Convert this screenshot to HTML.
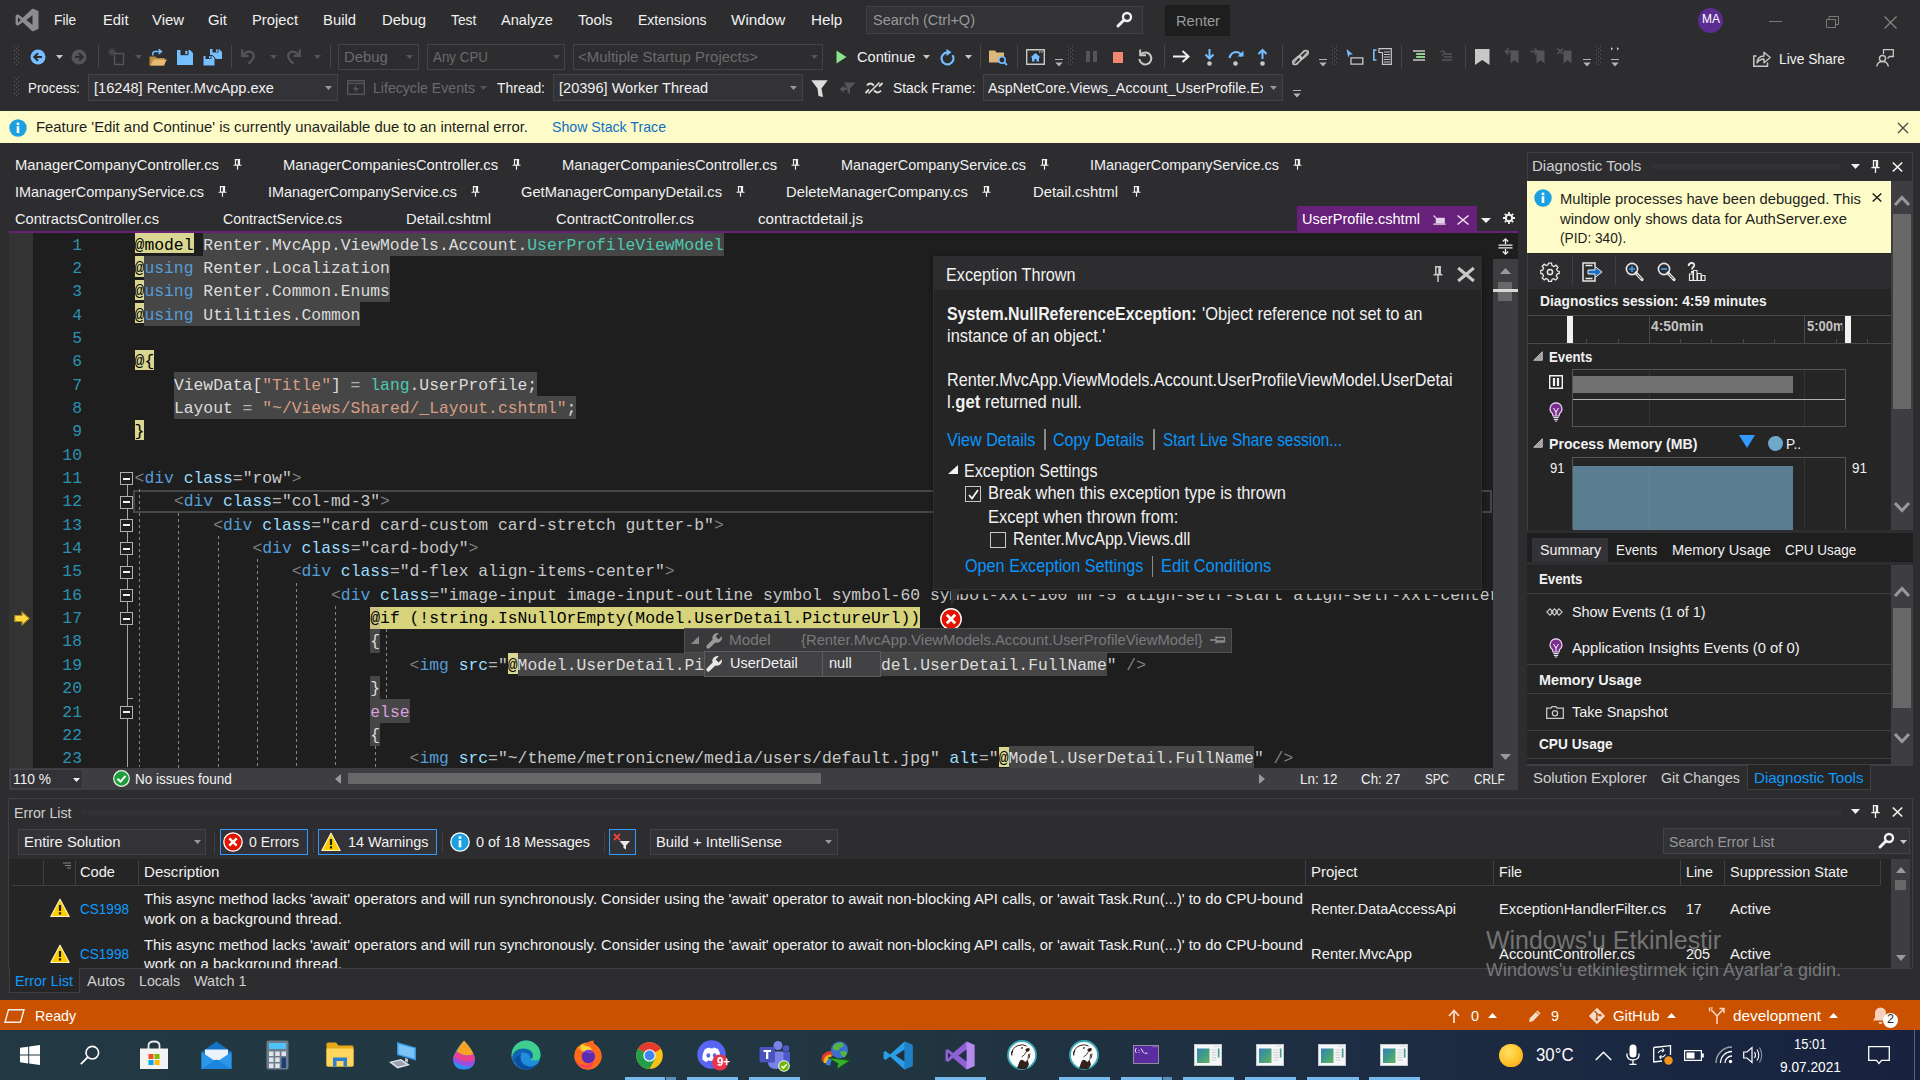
<!DOCTYPE html>
<html lang="en"><head><meta charset="utf-8"><title>Renter - Microsoft Visual Studio</title>
<style>
html,body{margin:0;padding:0;}
body{width:1920px;height:1080px;overflow:hidden;background:#2d2d30;position:relative;font-family:"Liberation Sans",sans-serif;font-size:15px;color:#f1f1f1;}
.a{position:absolute;box-sizing:border-box;}
.t{white-space:pre;transform-origin:0 50%;}
svg{display:block;overflow:visible;}
</style></head>
<body>
<svg class="a" style="left:15px;top:8px;" width="24" height="24" viewBox="0 0 24 24"><path d="M17.6 0.6 L23.5 3 V21 L17.6 23.4 L7.6 14.2 L3 17.8 L0.6 16.6 V7.4 L3 6.2 L7.6 9.8 Z M17.5 7.3 L11.4 12 L17.5 16.7 Z M3 9.3 V14.7 L5.8 12 Z" fill="#8c8c8f" fill-rule="evenodd"/></svg>
<div class="a t" id="t1" style="transform:scaleX(0.9143);left:54.2px;top:9.20px;height:21px;line-height:21px;font-size:15px;color:#f1f1f1;">File</div>
<div class="a t" id="t2" style="transform:scaleX(0.9861);left:102.5px;top:9.20px;height:21px;line-height:21px;font-size:15px;color:#f1f1f1;">Edit</div>
<div class="a t" id="t3" style="transform:scaleX(0.9922);left:152px;top:9.20px;height:21px;line-height:21px;font-size:15px;color:#f1f1f1;">View</div>
<div class="a t" id="t4" style="transform:scaleX(0.9910);left:208px;top:9.20px;height:21px;line-height:21px;font-size:15px;color:#f1f1f1;">Git</div>
<div class="a t" id="t5" style="transform:scaleX(0.9853);left:252px;top:9.20px;height:21px;line-height:21px;font-size:15px;color:#f1f1f1;">Project</div>
<div class="a t" id="t6" style="transform:scaleX(0.9892);left:322.5px;top:9.20px;height:21px;line-height:21px;font-size:15px;color:#f1f1f1;">Build</div>
<div class="a t" id="t7" style="transform:scaleX(0.9954);left:381.5px;top:9.20px;height:21px;line-height:21px;font-size:15px;color:#f1f1f1;">Debug</div>
<div class="a t" id="t8" style="transform:scaleX(0.9195);left:451px;top:9.20px;height:21px;line-height:21px;font-size:15px;color:#f1f1f1;">Test</div>
<div class="a t" id="t9" style="transform:scaleX(0.9705);left:501.2px;top:9.20px;height:21px;line-height:21px;font-size:15px;color:#f1f1f1;">Analyze</div>
<div class="a t" id="t10" style="transform:scaleX(0.9791);left:577.5px;top:9.20px;height:21px;line-height:21px;font-size:15px;color:#f1f1f1;">Tools</div>
<div class="a t" id="t11" style="transform:scaleX(0.9336);left:637.5px;top:9.20px;height:21px;line-height:21px;font-size:15px;color:#f1f1f1;">Extensions</div>
<div class="a t" id="t12" style="transform:scaleX(1.0176);left:731.2px;top:9.20px;height:21px;line-height:21px;font-size:15px;color:#f1f1f1;">Window</div>
<div class="a t" id="t13" style="transform:scaleX(1.0143);left:811.2px;top:9.20px;height:21px;line-height:21px;font-size:15px;color:#f1f1f1;">Help</div>
<div class="a" style="left:866px;top:6px;width:277px;height:28px;background:#333337;border:1px solid #3f3f46;"></div>
<div class="a t" id="t14" style="transform:scaleX(0.9673);left:873px;top:9.20px;height:21px;line-height:21px;font-size:15px;color:#999;">Search (Ctrl+Q)</div>
<svg class="a" style="left:1116px;top:11px;" width="17" height="17" viewBox="0 0 17 17"><circle cx="11" cy="6" r="4" fill="none" stroke="#f1f1f1" stroke-width="2.4"/><path d="M8 9 L2 15" stroke="#f1f1f1" stroke-width="3" stroke-linecap="round"/></svg>
<div class="a" style="left:1165px;top:5px;width:65px;height:31px;background:#1e1e1e;"></div>
<div class="a t" id="t15" style="transform:scaleX(0.9771);left:1175.5px;top:10.20px;height:21px;line-height:21px;font-size:15px;color:#9a9a9a;">Renter</div>
<div class="a" style="left:1698px;top:7.5px;width:25px;height:25px;background:#5c2d91;border-radius:50%;"></div>
<div class="a t" id="t16" style="transform:scaleX(0.9231);left:1701.5px;top:10.20px;height:18px;line-height:18px;font-size:13px;color:#fff;">MA</div>
<div class="a" style="left:1768.5px;top:21px;width:13px;height:1px;background:#7a7a7a;"></div>
<svg class="a" style="left:1826px;top:16px;" width="13" height="12" viewBox="0 0 13 12"><path d="M0.5 3.5H9.5V11.5H0.5Z M3 3V0.5H12.5V8.5H10" fill="none" stroke="#7a7a7a" stroke-width="1"/></svg>
<svg class="a" style="left:1884px;top:16px;" width="13" height="13" viewBox="0 0 13 13"><path d="M0.5 0.5L12.5 12.5M12.5 0.5L0.5 12.5" stroke="#8a8a8a" stroke-width="1.1"/></svg>
<svg class="a" style="left:14px;top:46px;" width="5" height="22" viewBox="0 0 5 22"><g fill="#5c5c60"><rect x="0" y="0" width="1" height="1"/><rect x="4" y="0" width="1" height="1"/><rect x="2" y="2" width="1" height="1"/><rect x="0" y="4" width="1" height="1"/><rect x="4" y="4" width="1" height="1"/><rect x="2" y="6" width="1" height="1"/><rect x="0" y="8" width="1" height="1"/><rect x="4" y="8" width="1" height="1"/><rect x="2" y="10" width="1" height="1"/><rect x="0" y="12" width="1" height="1"/><rect x="4" y="12" width="1" height="1"/><rect x="2" y="14" width="1" height="1"/><rect x="0" y="16" width="1" height="1"/><rect x="4" y="16" width="1" height="1"/><rect x="2" y="18" width="1" height="1"/></g></svg>
<svg class="a" style="left:30px;top:49px;" width="16" height="16" viewBox="0 0 16 16"><circle cx="8" cy="8" r="7.5" fill="#75beff"/><path d="M12 8H4.5M8 4.2L4.2 8L8 11.8" stroke="#2d2d30" stroke-width="2" fill="none"/></svg>
<svg class="a" style="left:55.5px;top:55px;" width="7" height="4" viewBox="0 0 7 4"><path d="M0 0H7L3.5 4Z" fill="#c8c8c8"/></svg>
<svg class="a" style="left:71px;top:49px;" width="16" height="16" viewBox="0 0 16 16"><circle cx="8" cy="8" r="7.5" fill="#555558"/><path d="M4 8H11.5M8 4.2L11.8 8L8 11.8" stroke="#2d2d30" stroke-width="2" fill="none"/></svg>
<div class="a" style="left:98px;top:44.5px;width:1px;height:23px;background:#46464a;"></div>
<svg class="a" style="left:108px;top:48px;" width="17" height="17" viewBox="0 0 17 17"><path d="M6.5 5.5H15.5V16.5H6.5Z" fill="none" stroke="#555558" stroke-width="1.4"/><path d="M4 0V8M0 4H8M1.2 1.2L6.8 6.8M6.8 1.2L1.2 6.8" stroke="#555558" stroke-width="1"/></svg>
<svg class="a" style="left:134.5px;top:55px;" width="7" height="4" viewBox="0 0 7 4"><path d="M0 0H7L3.5 4Z" fill="#555558"/></svg>
<svg class="a" style="left:149px;top:49px;" width="18" height="17" viewBox="0 0 18 17"><path d="M0.5 7.5H6.5L8 9H15.5V16.5H0.5Z" fill="#b8893f"/><path d="M1.5 16.5L4.5 10.5H17.8L14.8 16.5Z" fill="#e8bb74"/><path d="M3.8 6.5V4.8Q3.8 2.6 6.3 2.6H12M9.6 0.2L12.4 2.6L9.6 5" fill="none" stroke="#75beff" stroke-width="1.5"/></svg>
<svg class="a" style="left:177px;top:49.5px;" width="16" height="15" viewBox="0 0 16 15"><path d="M0 0H13L16 3V15H0Z M4 0V5H11V0 M8.2 0.8H10V4H8.2Z" fill="#75beff" fill-rule="evenodd"/><rect x="3.5" y="0" width="8" height="5.2" fill="#2d2d30"/><rect x="8.3" y="0.8" width="2" height="3.4" fill="#75beff"/></svg>
<svg class="a" style="left:203px;top:48.5px;" width="19" height="17" viewBox="0 0 19 17"><path d="M7 0H16L19 3V10H7Z" fill="#75beff"/><rect x="9.5" y="0" width="6" height="3.5" fill="#2d2d30"/><rect x="13" y="0.5" width="1.6" height="2.4" fill="#75beff"/><path d="M0 6.5H9.5L12 9V17H0Z" fill="#75beff" stroke="#2d2d30" stroke-width="1"/><rect x="2.5" y="6.5" width="6" height="3.5" fill="#2d2d30"/><rect x="6" y="7" width="1.6" height="2.4" fill="#75beff"/></svg>
<div class="a" style="left:231px;top:44.5px;width:1px;height:23px;background:#46464a;"></div>
<svg class="a" style="left:241px;top:49px;" width="15" height="15" viewBox="0 0 15 15"><path d="M1.2 0.5V6.8H7.5" fill="none" stroke="#555558" stroke-width="2.2"/><path d="M1.8 6.2Q7 0.8 11.5 3.8Q15.5 7.8 7.5 14.8" fill="none" stroke="#555558" stroke-width="2.2"/></svg>
<svg class="a" style="left:269.5px;top:55px;" width="7" height="4" viewBox="0 0 7 4"><path d="M0 0H7L3.5 4Z" fill="#555558"/></svg>
<svg class="a" style="left:286px;top:49px;" width="15" height="15" viewBox="0 0 15 15"><path d="M13.8 0.5V6.8H7.500" fill="none" stroke="#555558" stroke-width="2.2"/><path d="M13.2 6.2Q8 0.8 3.5 3.8Q-0.5 7.8 7.500 14.8" fill="none" stroke="#555558" stroke-width="2.2"/></svg>
<svg class="a" style="left:313.5px;top:55px;" width="7" height="4" viewBox="0 0 7 4"><path d="M0 0H7L3.5 4Z" fill="#555558"/></svg>
<div class="a" style="left:329.5px;top:44.5px;width:1px;height:23px;background:#46464a;"></div>
<div class="a" style="left:338px;top:43.5px;width:81px;height:26px;background:#2d2d30;border:1px solid #434346;"></div>
<div class="a t" id="t17" style="transform:scaleX(0.9886);left:343.8px;top:46.10px;height:21px;line-height:21px;font-size:15px;color:#6a6a6d;">Debug</div>
<svg class="a" style="left:406px;top:55.0px;" width="7" height="4" viewBox="0 0 7 4"><path d="M0 0H7L3.5 4Z" fill="#555558"/></svg>
<div class="a" style="left:427px;top:43.5px;width:138px;height:26px;background:#2d2d30;border:1px solid #434346;"></div>
<div class="a t" id="t18" style="transform:scaleX(0.8916);left:432.5px;top:46.10px;height:21px;line-height:21px;font-size:15px;color:#6a6a6d;">Any CPU</div>
<svg class="a" style="left:552.5px;top:55.0px;" width="7" height="4" viewBox="0 0 7 4"><path d="M0 0H7L3.5 4Z" fill="#555558"/></svg>
<div class="a" style="left:573px;top:43.5px;width:250px;height:26px;background:#2d2d30;border:1px solid #434346;"></div>
<div class="a t" id="t19" style="transform:scaleX(0.9995);left:577.5px;top:46.10px;height:21px;line-height:21px;font-size:15px;color:#6a6a6d;">&lt;Multiple Startup Projects&gt;</div>
<svg class="a" style="left:810.5px;top:55.0px;" width="7" height="4" viewBox="0 0 7 4"><path d="M0 0H7L3.5 4Z" fill="#555558"/></svg>
<svg class="a" style="left:835.5px;top:49.5px;" width="11" height="14" viewBox="0 0 11 14"><path d="M0.5 0.5L10.5 7L0.5 13.5Z" fill="#8ae28a"/></svg>
<div class="a t" id="t20" style="transform:scaleX(0.9742);left:857px;top:45.80px;height:21px;line-height:21px;font-size:15px;color:#f1f1f1;">Continue</div>
<svg class="a" style="left:922.5px;top:55px;" width="7" height="4" viewBox="0 0 7 4"><path d="M0 0H7L3.5 4Z" fill="#c8c8c8"/></svg>
<svg class="a" style="left:940px;top:48.5px;" width="15" height="16" viewBox="0 0 15 16"><path d="M12.6 6.2A6 6 0 1 1 7.5 3.4" fill="none" stroke="#75beff" stroke-width="2.2"/><path d="M6.5 0L11.5 3.3L6.5 7Z" fill="#75beff"/></svg>
<svg class="a" style="left:964.5px;top:55px;" width="7" height="4" viewBox="0 0 7 4"><path d="M0 0H7L3.5 4Z" fill="#c8c8c8"/></svg>
<div class="a" style="left:980px;top:44.5px;width:1px;height:23px;background:#46464a;"></div>
<svg class="a" style="left:988.5px;top:48.5px;" width="19" height="17" viewBox="0 0 19 17"><path d="M0 1.5H6L7.5 3.5H15V13.5H0Z" fill="#dcb67a"/><circle cx="13" cy="11" r="3.2" fill="#2d2d30" stroke="#75beff" stroke-width="1.5"/><path d="M15.3 13.3L18 16" stroke="#75beff" stroke-width="1.8"/></svg>
<div class="a" style="left:1017px;top:44.5px;width:1px;height:23px;background:#46464a;"></div>
<svg class="a" style="left:1025.5px;top:49px;" width="19" height="16" viewBox="0 0 19 16"><path d="M0.7 0.7H18.3V15.3H0.7Z" fill="none" stroke="#c8c8c8" stroke-width="1.4"/><path d="M9.5 4L4.5 8.5H6V12.5H8.5V10H10.5V12.5H13V8.5H14.5Z" fill="#75beff"/><rect x="13" y="2.3" width="1.4" height="1.2" fill="#c8c8c8"/><rect x="15.3" y="2.3" width="1.4" height="1.2" fill="#c8c8c8"/></svg>
<svg class="a" style="left:1055px;top:59px;" width="8" height="8" viewBox="0 0 8 8"><rect x="0" y="0" width="8" height="1" fill="#b4b4b4"/><path d="M0.3 3.6H7.7L4 7.6Z" fill="#b4b4b4"/></svg>
<svg class="a" style="left:1068px;top:46px;" width="5" height="22" viewBox="0 0 5 22"><g fill="#5c5c60"><rect x="0" y="0" width="1" height="1"/><rect x="4" y="0" width="1" height="1"/><rect x="2" y="2" width="1" height="1"/><rect x="0" y="4" width="1" height="1"/><rect x="4" y="4" width="1" height="1"/><rect x="2" y="6" width="1" height="1"/><rect x="0" y="8" width="1" height="1"/><rect x="4" y="8" width="1" height="1"/><rect x="2" y="10" width="1" height="1"/><rect x="0" y="12" width="1" height="1"/><rect x="4" y="12" width="1" height="1"/><rect x="2" y="14" width="1" height="1"/><rect x="0" y="16" width="1" height="1"/><rect x="4" y="16" width="1" height="1"/><rect x="2" y="18" width="1" height="1"/></g></svg>
<div class="a" style="left:1085.5px;top:51px;width:4px;height:11px;background:#555558;"></div>
<div class="a" style="left:1092.5px;top:51px;width:4px;height:11px;background:#555558;"></div>
<div class="a" style="left:1112.5px;top:52px;width:10.5px;height:10.5px;background:#f48771;"></div>
<svg class="a" style="left:1137px;top:48.5px;" width="16" height="16" viewBox="0 0 16 16"><path d="M4.2 5A6 6 0 1 1 2.3 10" fill="none" stroke="#c8c8c8" stroke-width="2"/><path d="M3.2 0.5V6.3H9" fill="none" stroke="#c8c8c8" stroke-width="2"/></svg>
<div class="a" style="left:1164px;top:44.5px;width:1px;height:23px;background:#46464a;"></div>
<svg class="a" style="left:1173px;top:50px;" width="17" height="13" viewBox="0 0 17 13"><path d="M0 6.5H15M9.5 1L15.5 6.5L9.5 12" fill="none" stroke="#f1f1f1" stroke-width="2"/></svg>
<svg class="a" style="left:1203.5px;top:49px;" width="11" height="17" viewBox="0 0 11 17"><path d="M5.5 0V9M1.5 5.5L5.5 9.5L9.5 5.5" fill="none" stroke="#75beff" stroke-width="2"/><circle cx="5.5" cy="14.5" r="2.3" fill="#c8c8c8"/></svg>
<svg class="a" style="left:1228px;top:50px;" width="16" height="16" viewBox="0 0 16 16"><path d="M1.5 8Q3 2 8.5 2Q12.5 2.3 13.5 6.5" fill="none" stroke="#75beff" stroke-width="2.2"/><path d="M9.5 6.5H15.5V0.8Z" fill="#75beff"/><circle cx="7.5" cy="13.5" r="2.3" fill="#c8c8c8"/></svg>
<svg class="a" style="left:1257px;top:49px;" width="11" height="17" viewBox="0 0 11 17"><path d="M5.5 10V1.5M1.5 5L5.5 1L9.5 5" fill="none" stroke="#75beff" stroke-width="2"/><circle cx="5.5" cy="14.5" r="2.3" fill="#c8c8c8"/></svg>
<div class="a" style="left:1282px;top:44.5px;width:1px;height:23px;background:#46464a;"></div>
<svg class="a" style="left:1290.5px;top:48.5px;" width="19" height="17" viewBox="0 0 19 17"><g fill="none" stroke="#c8c8c8" stroke-width="1.5"><rect x="-5" y="-2.3" width="10" height="4.600" rx="2.3" transform="translate(6.2,11.300) rotate(-42)"/><rect x="-5" y="-2.3" width="10" height="4.600" rx="2.3" transform="translate(12.800,5.700) rotate(-42)"/></g><path d="M1.500 15.500L13.500 1M5.500 16L17.500 1.500" stroke="#c8c8c8" stroke-width="1.100"/></svg>
<svg class="a" style="left:1319px;top:59px;" width="8" height="8" viewBox="0 0 8 8"><rect x="0" y="0" width="8" height="1" fill="#b4b4b4"/><path d="M0.3 3.6H7.7L4 7.6Z" fill="#b4b4b4"/></svg>
<svg class="a" style="left:1332px;top:46px;" width="5" height="22" viewBox="0 0 5 22"><g fill="#5c5c60"><rect x="0" y="0" width="1" height="1"/><rect x="4" y="0" width="1" height="1"/><rect x="2" y="2" width="1" height="1"/><rect x="0" y="4" width="1" height="1"/><rect x="4" y="4" width="1" height="1"/><rect x="2" y="6" width="1" height="1"/><rect x="0" y="8" width="1" height="1"/><rect x="4" y="8" width="1" height="1"/><rect x="2" y="10" width="1" height="1"/><rect x="0" y="12" width="1" height="1"/><rect x="4" y="12" width="1" height="1"/><rect x="2" y="14" width="1" height="1"/><rect x="0" y="16" width="1" height="1"/><rect x="4" y="16" width="1" height="1"/><rect x="2" y="18" width="1" height="1"/></g></svg>
<svg class="a" style="left:1346px;top:48.5px;" width="18" height="16" viewBox="0 0 18 16"><path d="M0.5 0L7 5.5H3.8L2.2 8.5Z" fill="#75beff"/><path d="M5 8.8H16.8V15.2H5Z" fill="none" stroke="#c8c8c8" stroke-width="1.3"/></svg>
<svg class="a" style="left:1372.5px;top:48px;" width="19" height="17" viewBox="0 0 19 17"><path d="M3.5 2H0.8V12H3.5" fill="none" stroke="#75beff" stroke-width="1.6"/><path d="M6 0.7H18.3V16.3H9.5V4.5H6Z" fill="none" stroke="#c8c8c8" stroke-width="1.2"/><path d="M11 4H17M11 6.5H17M11 9H17M11 11.5H17M11 14H17" stroke="#c8c8c8" stroke-width="1"/></svg>
<div class="a" style="left:1401px;top:44.5px;width:1px;height:23px;background:#46464a;"></div>
<svg class="a" style="left:1413px;top:50px;" width="13" height="12" viewBox="0 0 13 12"><path d="M0 1H12M4 4H12M4 7H12M0 10H12" stroke="#c8c8c8" stroke-width="1.3"/><path d="M3 4H12M3 7H12" stroke="#8ae28a" stroke-width="1.3"/></svg>
<svg class="a" style="left:1440px;top:50px;" width="13" height="12" viewBox="0 0 13 12"><path d="M4 4H12M4 7H12M2 10H12" stroke="#555558" stroke-width="1.3"/><path d="M0.5 2.5Q2.5 -0.5 4.5 2Q4.5 3.8 2.5 5V6.5" fill="none" stroke="#555558" stroke-width="1.2"/></svg>
<div class="a" style="left:1465px;top:44.5px;width:1px;height:23px;background:#46464a;"></div>
<svg class="a" style="left:1475px;top:48.5px;" width="15" height="16" viewBox="0 0 15 16"><path d="M0 0H14.5V16L7.2 11L0 16Z" fill="#c8c8c8"/></svg>
<svg class="a" style="left:1503.5px;top:48px;" width="15" height="16" viewBox="0 0 15 16"><path d="M6.5 2.5H14.500V15.500L10.500 12.200L6.5 15.500Z" fill="#555558"/><path d="M9 3.5H1.5M4.5 0.5L1.5 3.5L4.5 6.5" fill="none" stroke="#555558" stroke-width="1.5"/></svg>
<svg class="a" style="left:1530px;top:48px;" width="15" height="16" viewBox="0 0 15 16"><path d="M6.5 2.5H14.500V15.500L10.500 12.200L6.5 15.500Z" fill="#555558"/><path d="M0 3.5H7.5M4.5 0.5L7.5 3.5L4.5 6.5" fill="none" stroke="#555558" stroke-width="1.5"/></svg>
<svg class="a" style="left:1556.5px;top:48px;" width="15" height="16" viewBox="0 0 15 16"><path d="M6.5 2.5H14.500V15.500L10.500 12.200L6.5 15.500Z" fill="#555558"/><path d="M0.5 0.5L6 6M6 0.5L0.5 6" fill="none" stroke="#555558" stroke-width="1.5"/></svg>
<svg class="a" style="left:1582.5px;top:59px;" width="8" height="8" viewBox="0 0 8 8"><rect x="0" y="0" width="8" height="1" fill="#b4b4b4"/><path d="M0.3 3.6H7.7L4 7.6Z" fill="#b4b4b4"/></svg>
<svg class="a" style="left:1596px;top:46px;" width="5" height="22" viewBox="0 0 5 22"><g fill="#5c5c60"><rect x="0" y="0" width="1" height="1"/><rect x="4" y="0" width="1" height="1"/><rect x="2" y="2" width="1" height="1"/><rect x="0" y="4" width="1" height="1"/><rect x="4" y="4" width="1" height="1"/><rect x="2" y="6" width="1" height="1"/><rect x="0" y="8" width="1" height="1"/><rect x="4" y="8" width="1" height="1"/><rect x="2" y="10" width="1" height="1"/><rect x="0" y="12" width="1" height="1"/><rect x="4" y="12" width="1" height="1"/><rect x="2" y="14" width="1" height="1"/><rect x="0" y="16" width="1" height="1"/><rect x="4" y="16" width="1" height="1"/><rect x="2" y="18" width="1" height="1"/></g></svg>
<svg class="a" style="left:1610.5px;top:47px;" width="9" height="4" viewBox="0 0 9 4"><path d="M0 0L2 1.7L0 3.4ZM6 0L8 1.7L6 3.4Z" fill="#c8c8c8"/></svg>
<svg class="a" style="left:1610.5px;top:59px;" width="8" height="8" viewBox="0 0 8 8"><rect x="0" y="0" width="8" height="1" fill="#b4b4b4"/><path d="M0.3 3.6H7.7L4 7.6Z" fill="#b4b4b4"/></svg>
<svg class="a" style="left:1753px;top:51px;" width="18" height="16" viewBox="0 0 18 16"><path d="M3.5 5H0.8V15.2H14.5V11.5" fill="none" stroke="#c8c8c8" stroke-width="1.5"/><path d="M4 12Q4.5 5 11 5V1.2L17.2 6.5L11 11.8V8Q6.5 8 4 12Z" fill="none" stroke="#c8c8c8" stroke-width="1.4" stroke-linejoin="round"/></svg>
<div class="a t" id="t21" style="transform:scaleX(0.9203);left:1778.8px;top:48.30px;height:21px;line-height:21px;font-size:15px;color:#f1f1f1;">Live Share</div>
<svg class="a" style="left:1875.5px;top:48.5px;" width="18" height="18" viewBox="0 0 18 18"><path d="M7.5 5V0.7H17.3V7.5H13.5L11.5 9.5" fill="none" stroke="#c8c8c8" stroke-width="1.3"/><circle cx="6.5" cy="9.5" r="3" fill="none" stroke="#c8c8c8" stroke-width="1.4"/><path d="M0.7 17.5Q1.5 12.5 6.5 12.5Q11.5 12.5 12.3 17.5" fill="none" stroke="#c8c8c8" stroke-width="1.4"/></svg>
<svg class="a" style="left:14px;top:77px;" width="5" height="22" viewBox="0 0 5 22"><g fill="#5c5c60"><rect x="0" y="0" width="1" height="1"/><rect x="4" y="0" width="1" height="1"/><rect x="2" y="2" width="1" height="1"/><rect x="0" y="4" width="1" height="1"/><rect x="4" y="4" width="1" height="1"/><rect x="2" y="6" width="1" height="1"/><rect x="0" y="8" width="1" height="1"/><rect x="4" y="8" width="1" height="1"/><rect x="2" y="10" width="1" height="1"/><rect x="0" y="12" width="1" height="1"/><rect x="4" y="12" width="1" height="1"/><rect x="2" y="14" width="1" height="1"/><rect x="0" y="16" width="1" height="1"/><rect x="4" y="16" width="1" height="1"/><rect x="2" y="18" width="1" height="1"/></g></svg>
<div class="a t" id="t22" style="transform:scaleX(0.8876);left:28.2px;top:76.80px;height:21px;line-height:21px;font-size:15px;color:#f1f1f1;">Process:</div>
<div class="a" style="left:88px;top:74px;width:250px;height:27px;background:#333337;border:1px solid #434346;"></div>
<div class="a t" id="t23" style="transform:scaleX(0.9723);left:93.8px;top:77.10px;height:21px;line-height:21px;font-size:15px;color:#f1f1f1;">[16248] Renter.MvcApp.exe</div>
<svg class="a" style="left:325px;top:86.0px;" width="7" height="4" viewBox="0 0 7 4"><path d="M0 0H7L3.5 4Z" fill="#999"/></svg>
<svg class="a" style="left:347px;top:79.5px;" width="18" height="15" viewBox="0 0 18 15"><path d="M0.7 0.7H17.3V14.3H0.7Z M0.7 3.5H17.3" fill="none" stroke="#555558" stroke-width="1.4"/><path d="M9.5 4.5L6 9.5H9L7.5 13.5L12 8H9Z" fill="#555558"/></svg>
<div class="a t" id="t24" style="transform:scaleX(0.9410);left:372.5px;top:76.80px;height:21px;line-height:21px;font-size:15px;color:#6a6a6d;">Lifecycle Events</div>
<svg class="a" style="left:480px;top:86px;" width="7" height="4" viewBox="0 0 7 4"><path d="M0 0H7L3.5 4Z" fill="#555558"/></svg>
<div class="a t" id="t25" style="transform:scaleX(0.9284);left:497px;top:76.80px;height:21px;line-height:21px;font-size:15px;color:#f1f1f1;">Thread:</div>
<div class="a" style="left:553px;top:74px;width:250px;height:27px;background:#333337;border:1px solid #434346;"></div>
<div class="a t" id="t26" style="transform:scaleX(0.9707);left:558.8px;top:77.10px;height:21px;line-height:21px;font-size:15px;color:#f1f1f1;">[20396] Worker Thread</div>
<svg class="a" style="left:790px;top:86.0px;" width="7" height="4" viewBox="0 0 7 4"><path d="M0 0H7L3.5 4Z" fill="#999"/></svg>
<svg class="a" style="left:811px;top:79.5px;" width="17" height="18" viewBox="0 0 17 18"><path d="M0.3 0.3H16.7L10.5 8.5L12 17L7.5 16L6.5 8.5Z" fill="#dcdcdc"/></svg>
<svg class="a" style="left:838.5px;top:79.5px;" width="17" height="17" viewBox="0 0 17 17"><path d="M5 2.5H16.5L11 8.5V14L8.5 12.5V8.5Z" fill="#555558"/><path d="M0.5 9L5 5.5V7.5H8V10H5V12.5Z" fill="#555558"/></svg>
<svg class="a" style="left:865px;top:80.5px;" width="18" height="14" viewBox="0 0 18 14"><path d="M0.5 12L4 8.5M2 4.5Q5 0.5 9 4.5M9 9.5Q13 13.5 16 9.5M14 5.5L17.5 2" fill="none" stroke="#dcdcdc" stroke-width="1.8"/><path d="M3.5 12.5L14.5 1.5" stroke="#dcdcdc" stroke-width="1.6"/></svg>
<div class="a t" id="t27" style="transform:scaleX(0.9250);left:892.5px;top:76.80px;height:21px;line-height:21px;font-size:15px;color:#f1f1f1;">Stack Frame:</div>
<div class="a" style="left:983px;top:74px;width:300px;height:27px;background:#333337;border:1px solid #434346;"></div>
<div class="a" style="left:988.2px;top:75px;width:275.3px;height:25px;overflow:hidden;">
<div class="a t" id="t28" style="transform:scaleX(0.9543);left:0px;top:2.10px;height:21px;line-height:21px;font-size:15px;color:#f1f1f1;">AspNetCore.Views_Account_UserProfile.Ex</div>
</div>
<svg class="a" style="left:1270px;top:86px;" width="7" height="4" viewBox="0 0 7 4"><path d="M0 0H7L3.5 4Z" fill="#999"/></svg>
<svg class="a" style="left:1293px;top:90px;" width="8" height="8" viewBox="0 0 8 8"><rect x="0" y="0" width="8" height="1" fill="#b4b4b4"/><path d="M0.3 3.6H7.7L4 7.6Z" fill="#b4b4b4"/></svg>
<div class="a" style="left:0px;top:111.2px;width:1920px;height:31.6px;background:#fdfbc8;"></div>
<svg class="a" style="left:8.5px;top:118.5px;" width="18" height="18" viewBox="0 0 18 18"><circle cx="9" cy="9" r="8.7" fill="#1ba1e2"/><rect x="7.7" y="7.2" width="2.6" height="6.8" fill="#fff"/><rect x="7.7" y="3.6" width="2.6" height="2.5" fill="#fff"/></svg>
<div class="a t" id="t29" style="transform:scaleX(0.9902);left:36px;top:116.20px;height:21px;line-height:21px;font-size:15px;color:#1e1e1e;">Feature 'Edit and Continue' is currently unavailable due to an internal error.</div>
<div class="a t" id="t30" style="transform:scaleX(0.9430);left:552px;top:116.20px;height:21px;line-height:21px;font-size:15px;color:#0e70c0;">Show Stack Trace</div>
<svg class="a" style="left:1897px;top:121.5px;" width="12" height="12" viewBox="0 0 12 12"><path d="M1 1L11 11M11 1L1 11" stroke="#4a4a4a" stroke-width="1.4"/></svg>
<div class="a t" id="t31" style="transform:scaleX(0.9866);left:15px;top:153.70px;height:21px;line-height:21px;font-size:15px;color:#f1f1f1;">ManagerCompanyController.cs</div>
<svg class="a" style="left:233.2px;top:159.2px;" width="9" height="11" viewBox="0 0 9 11"><path d="M1.800 0.600H7.200M2.500 0.600V6H6.500V0.600M5.400 0.600V6M0.500 6.200H8.500M4.500 6.200V10.800" fill="none" stroke="#f1f1f1" stroke-width="1.150"/></svg>
<div class="a t" id="t32" style="transform:scaleX(0.9843);left:283px;top:153.70px;height:21px;line-height:21px;font-size:15px;color:#f1f1f1;">ManagerCompaniesController.cs</div>
<svg class="a" style="left:512.2px;top:159.2px;" width="9" height="11" viewBox="0 0 9 11"><path d="M1.800 0.600H7.200M2.500 0.600V6H6.500V0.600M5.400 0.600V6M0.500 6.200H8.500M4.500 6.200V10.800" fill="none" stroke="#f1f1f1" stroke-width="1.150"/></svg>
<div class="a t" id="t33" style="transform:scaleX(0.9843);left:562px;top:153.70px;height:21px;line-height:21px;font-size:15px;color:#f1f1f1;">ManagerCompaniesController.cs</div>
<svg class="a" style="left:791.2px;top:159.2px;" width="9" height="11" viewBox="0 0 9 11"><path d="M1.800 0.600H7.200M2.500 0.600V6H6.500V0.600M5.400 0.600V6M0.500 6.200H8.500M4.500 6.200V10.800" fill="none" stroke="#f1f1f1" stroke-width="1.150"/></svg>
<div class="a t" id="t34" style="transform:scaleX(0.9606);left:841px;top:153.70px;height:21px;line-height:21px;font-size:15px;color:#f1f1f1;">ManagerCompanyService.cs</div>
<svg class="a" style="left:1040.2px;top:159.2px;" width="9" height="11" viewBox="0 0 9 11"><path d="M1.800 0.600H7.200M2.500 0.600V6H6.500V0.600M5.400 0.600V6M0.500 6.200H8.500M4.500 6.200V10.800" fill="none" stroke="#f1f1f1" stroke-width="1.150"/></svg>
<div class="a t" id="t35" style="transform:scaleX(0.9605);left:1090px;top:153.70px;height:21px;line-height:21px;font-size:15px;color:#f1f1f1;">IManagerCompanyService.cs</div>
<svg class="a" style="left:1293.2px;top:159.2px;" width="9" height="11" viewBox="0 0 9 11"><path d="M1.800 0.600H7.200M2.500 0.600V6H6.500V0.600M5.400 0.600V6M0.500 6.200H8.500M4.500 6.200V10.800" fill="none" stroke="#f1f1f1" stroke-width="1.150"/></svg>
<div class="a t" id="t36" style="transform:scaleX(0.9605);left:15px;top:180.70px;height:21px;line-height:21px;font-size:15px;color:#f1f1f1;">IManagerCompanyService.cs</div>
<svg class="a" style="left:218.2px;top:186.2px;" width="9" height="11" viewBox="0 0 9 11"><path d="M1.800 0.600H7.200M2.500 0.600V6H6.500V0.600M5.400 0.600V6M0.500 6.200H8.500M4.500 6.200V10.800" fill="none" stroke="#f1f1f1" stroke-width="1.150"/></svg>
<div class="a t" id="t37" style="transform:scaleX(0.9605);left:268px;top:180.70px;height:21px;line-height:21px;font-size:15px;color:#f1f1f1;">IManagerCompanyService.cs</div>
<svg class="a" style="left:471.2px;top:186.2px;" width="9" height="11" viewBox="0 0 9 11"><path d="M1.800 0.600H7.200M2.500 0.600V6H6.500V0.600M5.400 0.600V6M0.500 6.200H8.500M4.500 6.200V10.800" fill="none" stroke="#f1f1f1" stroke-width="1.150"/></svg>
<div class="a t" id="t38" style="transform:scaleX(0.9800);left:521px;top:180.70px;height:21px;line-height:21px;font-size:15px;color:#f1f1f1;">GetManagerCompanyDetail.cs</div>
<svg class="a" style="left:736.2px;top:186.2px;" width="9" height="11" viewBox="0 0 9 11"><path d="M1.800 0.600H7.200M2.500 0.600V6H6.500V0.600M5.400 0.600V6M0.500 6.200H8.500M4.500 6.200V10.800" fill="none" stroke="#f1f1f1" stroke-width="1.150"/></svg>
<div class="a t" id="t39" style="transform:scaleX(0.9848);left:786px;top:180.70px;height:21px;line-height:21px;font-size:15px;color:#f1f1f1;">DeleteManagerCompany.cs</div>
<svg class="a" style="left:982.2px;top:186.2px;" width="9" height="11" viewBox="0 0 9 11"><path d="M1.800 0.600H7.200M2.500 0.600V6H6.500V0.600M5.400 0.600V6M0.500 6.200H8.500M4.500 6.200V10.800" fill="none" stroke="#f1f1f1" stroke-width="1.150"/></svg>
<div class="a t" id="t40" style="transform:scaleX(0.9900);left:1032.5px;top:180.70px;height:21px;line-height:21px;font-size:15px;color:#f1f1f1;">Detail.cshtml</div>
<svg class="a" style="left:1131.7px;top:186.2px;" width="9" height="11" viewBox="0 0 9 11"><path d="M1.800 0.600H7.200M2.500 0.600V6H6.500V0.600M5.400 0.600V6M0.500 6.200H8.500M4.500 6.200V10.800" fill="none" stroke="#f1f1f1" stroke-width="1.150"/></svg>
<div class="a t" id="t41" style="transform:scaleX(0.9759);left:15px;top:207.70px;height:21px;line-height:21px;font-size:15px;color:#f1f1f1;">ContractsController.cs</div>
<div class="a t" id="t42" style="transform:scaleX(0.9454);left:223px;top:207.70px;height:21px;line-height:21px;font-size:15px;color:#f1f1f1;">ContractService.cs</div>
<div class="a t" id="t43" style="transform:scaleX(0.9900);left:406px;top:207.70px;height:21px;line-height:21px;font-size:15px;color:#f1f1f1;">Detail.cshtml</div>
<div class="a t" id="t44" style="transform:scaleX(0.9853);left:556px;top:207.70px;height:21px;line-height:21px;font-size:15px;color:#f1f1f1;">ContractController.cs</div>
<div class="a t" id="t45" style="transform:scaleX(1.0075);left:758px;top:207.70px;height:21px;line-height:21px;font-size:15px;color:#f1f1f1;">contractdetail.js</div>
<div class="a" style="left:1297px;top:206px;width:180px;height:26px;background:#68217a;"></div>
<div class="a t" id="t46" style="transform:scaleX(0.9696);left:1302px;top:208.20px;height:21px;line-height:21px;font-size:15px;color:#fff;">UserProfile.cshtml</div>
<svg class="a" style="left:1433px;top:215px;" width="13" height="10" viewBox="0 0 13 10"><path d="M2.8 2.8H11.8V8.5H2.8Z" fill="#e3d3ea"/><path d="M0.5 0.5L3 3M0.3 9.2H12.7" stroke="#e3d3ea" stroke-width="1.2"/></svg>
<svg class="a" style="left:1457px;top:215px;" width="12" height="10" viewBox="0 0 12 10"><path d="M0.5 0.5L11.5 9.5M11.5 0.5L0.5 9.5" stroke="#eadff0" stroke-width="1.6"/></svg>
<svg class="a" style="left:1481px;top:218px;" width="10" height="5" viewBox="0 0 10 5"><path d="M0 0H10L5 5Z" fill="#f1f1f1"/></svg>
<svg class="a" style="left:1503px;top:212px;" width="12" height="12" viewBox="0 0 12 12"><g fill="none" stroke="#f1f1f1"><circle cx="6" cy="6" r="3.2" stroke-width="2"/><path d="M6 0V2M6 10V12M0 6H2M10 6H12M1.8 1.8L3.2 3.2M8.8 8.8L10.2 10.2M1.8 10.2L3.2 8.8M8.8 3.2L10.2 1.8" stroke-width="1.8"/></g></svg>
<div class="a" style="left:9px;top:233px;width:1508.5px;height:534.5px;background:#1e1e1e;"></div>
<div class="a" style="left:9px;top:233px;width:23.5px;height:534.5px;background:#333333;"></div>
<svg class="a" style="left:1498px;top:238px;" width="15" height="17" viewBox="0 0 15 17"><path d="M0.5 7.2H14.5M0.5 9.8H14.5" stroke="#f1f1f1" stroke-width="1.2"/><path d="M7.5 1V6M7.5 11V16M4.8 3.5L7.5 0.8L10.2 3.5M4.8 13.5L7.5 16.2L10.2 13.5" fill="none" stroke="#f1f1f1" stroke-width="1.3"/></svg>
<div class="a" style="left:1493px;top:259px;width:24.5px;height:508.5px;background:#3e3e42;"></div>
<svg class="a" style="left:1500px;top:268px;" width="11" height="6" viewBox="0 0 11 6"><path d="M0 6H11L5.5 0Z" fill="#999"/></svg>
<svg class="a" style="left:1500px;top:754px;" width="11" height="6" viewBox="0 0 11 6"><path d="M0 0H11L5.5 6Z" fill="#999"/></svg>
<div class="a" style="left:1498px;top:282px;width:14px;height:19px;background:#686868;"></div>
<div class="a" style="left:1493px;top:289px;width:24.5px;height:3px;background:#d8d8d8;"></div>
<div class="a" style="left:133.3px;top:490.3px;width:1358.7px;height:23px;border:2px solid #464646;"></div>
<div class="a" style="left:139.0px;top:489.15000000000003px;width:1px;height:278.34999999999997px;background:repeating-linear-gradient(to bottom,#858585 0 3px,transparent 3px 6px);"></div>
<div class="a" style="left:178.25px;top:512.5px;width:1px;height:255.0px;background:repeating-linear-gradient(to bottom,#858585 0 3px,transparent 3px 6px);"></div>
<div class="a" style="left:217.5px;top:535.85px;width:1px;height:231.64999999999998px;background:repeating-linear-gradient(to bottom,#858585 0 3px,transparent 3px 6px);"></div>
<div class="a" style="left:256.75px;top:559.2px;width:1px;height:208.29999999999995px;background:repeating-linear-gradient(to bottom,#858585 0 3px,transparent 3px 6px);"></div>
<div class="a" style="left:296.0px;top:582.55px;width:1px;height:184.95000000000005px;background:repeating-linear-gradient(to bottom,#858585 0 3px,transparent 3px 6px);"></div>
<div class="a" style="left:335.25px;top:605.9000000000001px;width:1px;height:161.5999999999999px;background:repeating-linear-gradient(to bottom,#858585 0 3px,transparent 3px 6px);"></div>
<div class="a" style="left:385.5px;top:629.25px;width:1px;height:70.04999999999995px;background:repeating-linear-gradient(to bottom,#858585 0 3px,transparent 3px 6px);"></div>
<div class="a" style="left:375px;top:746.0px;width:1px;height:21.5px;background:repeating-linear-gradient(to bottom,#858585 0 3px,transparent 3px 6px);"></div>
<div class="a" style="left:127px;top:477.475px;width:1px;height:290.025px;background:#a5a5a5;"></div>
<div class="a" style="left:120px;top:472.175px;width:13px;height:13px;background:#1e1e1e;border:1px solid #b0b0b0;"></div>
<div class="a" style="left:123px;top:477.675px;width:7px;height:2px;background:#f1f1f1;"></div>
<div class="a" style="left:120px;top:495.52500000000003px;width:13px;height:13px;background:#1e1e1e;border:1px solid #b0b0b0;"></div>
<div class="a" style="left:123px;top:501.02500000000003px;width:7px;height:2px;background:#f1f1f1;"></div>
<div class="a" style="left:120px;top:518.875px;width:13px;height:13px;background:#1e1e1e;border:1px solid #b0b0b0;"></div>
<div class="a" style="left:123px;top:524.375px;width:7px;height:2px;background:#f1f1f1;"></div>
<div class="a" style="left:120px;top:542.225px;width:13px;height:13px;background:#1e1e1e;border:1px solid #b0b0b0;"></div>
<div class="a" style="left:123px;top:547.725px;width:7px;height:2px;background:#f1f1f1;"></div>
<div class="a" style="left:120px;top:565.575px;width:13px;height:13px;background:#1e1e1e;border:1px solid #b0b0b0;"></div>
<div class="a" style="left:123px;top:571.075px;width:7px;height:2px;background:#f1f1f1;"></div>
<div class="a" style="left:120px;top:588.925px;width:13px;height:13px;background:#1e1e1e;border:1px solid #b0b0b0;"></div>
<div class="a" style="left:123px;top:594.425px;width:7px;height:2px;background:#f1f1f1;"></div>
<div class="a" style="left:120px;top:612.2750000000001px;width:13px;height:13px;background:#1e1e1e;border:1px solid #b0b0b0;"></div>
<div class="a" style="left:123px;top:617.7750000000001px;width:7px;height:2px;background:#f1f1f1;"></div>
<div class="a" style="left:120px;top:705.675px;width:13px;height:13px;background:#1e1e1e;border:1px solid #b0b0b0;"></div>
<div class="a" style="left:123px;top:711.175px;width:7px;height:2px;background:#f1f1f1;"></div>
<div class="a" style="left:127px;top:697.8px;width:6px;height:1px;background:#a5a5a5;"></div>
<div class="a" style="left:33px;top:233.50px;width:49px;height:23.35px;line-height:23.35px;text-align:right;font-family:'Liberation Mono', monospace;font-size:16.37px;color:#2b91af;">1</div>
<div class="a" style="left:134.6px;top:233.1px;width:58.92px;height:20.35px;background:#dad792;"></div>
<div class="a" style="left:203.34px;top:232.3px;width:324.06px;height:23.35px;background:#464646;"></div>
<div class="a" style="left:527.4px;top:232.3px;width:196.4px;height:23.35px;background:#464646;"></div>
<div class="a" style="left:134.60px;top:233.50px;width:1358.4px;overflow:hidden;height:23.35px;line-height:23.35px;white-space:pre;font-family:'Liberation Mono', monospace;font-size:16.37px;"><span style="color:#000;">@model</span><span style="color:#dcdcdc;"> </span><span style="color:#dcdcdc;">Renter.MvcApp.ViewModels.Account.</span><span style="color:#4ec9b0;">UserProfileViewModel</span></div>
<div class="a" style="left:33px;top:256.85px;width:49px;height:23.35px;line-height:23.35px;text-align:right;font-family:'Liberation Mono', monospace;font-size:16.37px;color:#2b91af;">2</div>
<div class="a" style="left:134.6px;top:256.45px;width:9.82px;height:20.35px;background:#dad792;"></div>
<div class="a" style="left:144.42px;top:255.65px;width:49.1px;height:23.35px;background:#464646;"></div>
<div class="a" style="left:193.52px;top:255.65px;width:196.4px;height:23.35px;background:#464646;"></div>
<div class="a" style="left:134.60px;top:256.85px;width:1358.4px;overflow:hidden;height:23.35px;line-height:23.35px;white-space:pre;font-family:'Liberation Mono', monospace;font-size:16.37px;"><span style="color:#000;">@</span><span style="color:#569cd6;">using</span><span style="color:#dcdcdc;"> Renter.Localization</span></div>
<div class="a" style="left:33px;top:280.20px;width:49px;height:23.35px;line-height:23.35px;text-align:right;font-family:'Liberation Mono', monospace;font-size:16.37px;color:#2b91af;">3</div>
<div class="a" style="left:134.6px;top:279.8px;width:9.82px;height:20.35px;background:#dad792;"></div>
<div class="a" style="left:144.42px;top:279.0px;width:49.1px;height:23.35px;background:#464646;"></div>
<div class="a" style="left:193.52px;top:279.0px;width:196.4px;height:23.35px;background:#464646;"></div>
<div class="a" style="left:134.60px;top:280.20px;width:1358.4px;overflow:hidden;height:23.35px;line-height:23.35px;white-space:pre;font-family:'Liberation Mono', monospace;font-size:16.37px;"><span style="color:#000;">@</span><span style="color:#569cd6;">using</span><span style="color:#dcdcdc;"> Renter.Common.Enums</span></div>
<div class="a" style="left:33px;top:303.55px;width:49px;height:23.35px;line-height:23.35px;text-align:right;font-family:'Liberation Mono', monospace;font-size:16.37px;color:#2b91af;">4</div>
<div class="a" style="left:134.6px;top:303.15px;width:9.82px;height:20.35px;background:#dad792;"></div>
<div class="a" style="left:144.42px;top:302.35px;width:49.1px;height:23.35px;background:#464646;"></div>
<div class="a" style="left:193.52px;top:302.35px;width:166.94px;height:23.35px;background:#464646;"></div>
<div class="a" style="left:134.60px;top:303.55px;width:1358.4px;overflow:hidden;height:23.35px;line-height:23.35px;white-space:pre;font-family:'Liberation Mono', monospace;font-size:16.37px;"><span style="color:#000;">@</span><span style="color:#569cd6;">using</span><span style="color:#dcdcdc;"> Utilities.Common</span></div>
<div class="a" style="left:33px;top:326.90px;width:49px;height:23.35px;line-height:23.35px;text-align:right;font-family:'Liberation Mono', monospace;font-size:16.37px;color:#2b91af;">5</div>
<div class="a" style="left:33px;top:350.25px;width:49px;height:23.35px;line-height:23.35px;text-align:right;font-family:'Liberation Mono', monospace;font-size:16.37px;color:#2b91af;">6</div>
<div class="a" style="left:134.6px;top:349.85px;width:19.64px;height:20.35px;background:#dad792;"></div>
<div class="a" style="left:134.60px;top:350.25px;width:1358.4px;overflow:hidden;height:23.35px;line-height:23.35px;white-space:pre;font-family:'Liberation Mono', monospace;font-size:16.37px;"><span style="color:#000;">@{</span></div>
<div class="a" style="left:33px;top:373.60px;width:49px;height:23.35px;line-height:23.35px;text-align:right;font-family:'Liberation Mono', monospace;font-size:16.37px;color:#2b91af;">7</div>
<div class="a" style="left:173.88px;top:372.4px;width:88.38px;height:23.35px;background:#464646;"></div>
<div class="a" style="left:262.26px;top:372.4px;width:68.74px;height:23.35px;background:#464646;"></div>
<div class="a" style="left:331.0px;top:372.4px;width:19.64px;height:23.35px;background:#464646;"></div>
<div class="a" style="left:350.64px;top:372.4px;width:9.82px;height:23.35px;background:#464646;"></div>
<div class="a" style="left:360.46px;top:372.4px;width:9.82px;height:23.35px;background:#464646;"></div>
<div class="a" style="left:370.28px;top:372.4px;width:39.28px;height:23.35px;background:#464646;"></div>
<div class="a" style="left:409.56px;top:372.4px;width:127.66px;height:23.35px;background:#464646;"></div>
<div class="a" style="left:173.88px;top:373.60px;width:1319.1px;overflow:hidden;height:23.35px;line-height:23.35px;white-space:pre;font-family:'Liberation Mono', monospace;font-size:16.37px;"><span style="color:#dcdcdc;">ViewData[</span><span style="color:#d69d85;">"Title"</span><span style="color:#dcdcdc;">] </span><span style="color:#b4b4b4;">=</span><span style="color:#dcdcdc;"> </span><span style="color:#4ec9b0;">lang</span><span style="color:#dcdcdc;">.UserProfile;</span></div>
<div class="a" style="left:33px;top:396.95px;width:49px;height:23.35px;line-height:23.35px;text-align:right;font-family:'Liberation Mono', monospace;font-size:16.37px;color:#2b91af;">8</div>
<div class="a" style="left:173.88px;top:395.75px;width:68.74px;height:23.35px;background:#464646;"></div>
<div class="a" style="left:242.62px;top:395.75px;width:9.82px;height:23.35px;background:#464646;"></div>
<div class="a" style="left:252.44px;top:395.75px;width:9.82px;height:23.35px;background:#464646;"></div>
<div class="a" style="left:262.26px;top:395.75px;width:304.42px;height:23.35px;background:#464646;"></div>
<div class="a" style="left:566.68px;top:395.75px;width:9.82px;height:23.35px;background:#464646;"></div>
<div class="a" style="left:173.88px;top:396.95px;width:1319.1px;overflow:hidden;height:23.35px;line-height:23.35px;white-space:pre;font-family:'Liberation Mono', monospace;font-size:16.37px;"><span style="color:#dcdcdc;">Layout </span><span style="color:#b4b4b4;">=</span><span style="color:#dcdcdc;"> </span><span style="color:#d69d85;">"~/Views/Shared/_Layout.cshtml"</span><span style="color:#dcdcdc;">;</span></div>
<div class="a" style="left:33px;top:420.30px;width:49px;height:23.35px;line-height:23.35px;text-align:right;font-family:'Liberation Mono', monospace;font-size:16.37px;color:#2b91af;">9</div>
<div class="a" style="left:134.6px;top:419.9px;width:9.82px;height:20.35px;background:#dad792;"></div>
<div class="a" style="left:134.60px;top:420.30px;width:1358.4px;overflow:hidden;height:23.35px;line-height:23.35px;white-space:pre;font-family:'Liberation Mono', monospace;font-size:16.37px;"><span style="color:#000;">}</span></div>
<div class="a" style="left:33px;top:443.65px;width:49px;height:23.35px;line-height:23.35px;text-align:right;font-family:'Liberation Mono', monospace;font-size:16.37px;color:#2b91af;">10</div>
<div class="a" style="left:33px;top:467.00px;width:49px;height:23.35px;line-height:23.35px;text-align:right;font-family:'Liberation Mono', monospace;font-size:16.37px;color:#2b91af;">11</div>
<div class="a" style="left:134.60px;top:467.00px;width:1358.4px;overflow:hidden;height:23.35px;line-height:23.35px;white-space:pre;font-family:'Liberation Mono', monospace;font-size:16.37px;"><span style="color:#808080;">&lt;</span><span style="color:#569cd6;">div</span><span style="color:#dcdcdc;"> </span><span style="color:#9cdcfe;">class</span><span style="color:#b4b4b4;">=</span><span style="color:#c8c8c8;">"row"</span><span style="color:#808080;">&gt;</span></div>
<div class="a" style="left:33px;top:490.35px;width:49px;height:23.35px;line-height:23.35px;text-align:right;font-family:'Liberation Mono', monospace;font-size:16.37px;color:#2b91af;">12</div>
<div class="a" style="left:173.88px;top:490.35px;width:1319.1px;overflow:hidden;height:23.35px;line-height:23.35px;white-space:pre;font-family:'Liberation Mono', monospace;font-size:16.37px;"><span style="color:#808080;">&lt;</span><span style="color:#569cd6;">div</span><span style="color:#dcdcdc;"> </span><span style="color:#9cdcfe;">class</span><span style="color:#b4b4b4;">=</span><span style="color:#c8c8c8;">"col-md-3"</span><span style="color:#808080;">&gt;</span></div>
<div class="a" style="left:33px;top:513.70px;width:49px;height:23.35px;line-height:23.35px;text-align:right;font-family:'Liberation Mono', monospace;font-size:16.37px;color:#2b91af;">13</div>
<div class="a" style="left:213.16px;top:513.70px;width:1279.8px;overflow:hidden;height:23.35px;line-height:23.35px;white-space:pre;font-family:'Liberation Mono', monospace;font-size:16.37px;"><span style="color:#808080;">&lt;</span><span style="color:#569cd6;">div</span><span style="color:#dcdcdc;"> </span><span style="color:#9cdcfe;">class</span><span style="color:#b4b4b4;">=</span><span style="color:#c8c8c8;">"card card-custom card-stretch gutter-b"</span><span style="color:#808080;">&gt;</span></div>
<div class="a" style="left:33px;top:537.05px;width:49px;height:23.35px;line-height:23.35px;text-align:right;font-family:'Liberation Mono', monospace;font-size:16.37px;color:#2b91af;">14</div>
<div class="a" style="left:252.44px;top:537.05px;width:1240.6px;overflow:hidden;height:23.35px;line-height:23.35px;white-space:pre;font-family:'Liberation Mono', monospace;font-size:16.37px;"><span style="color:#808080;">&lt;</span><span style="color:#569cd6;">div</span><span style="color:#dcdcdc;"> </span><span style="color:#9cdcfe;">class</span><span style="color:#b4b4b4;">=</span><span style="color:#c8c8c8;">"card-body"</span><span style="color:#808080;">&gt;</span></div>
<div class="a" style="left:33px;top:560.40px;width:49px;height:23.35px;line-height:23.35px;text-align:right;font-family:'Liberation Mono', monospace;font-size:16.37px;color:#2b91af;">15</div>
<div class="a" style="left:291.72px;top:560.40px;width:1201.3px;overflow:hidden;height:23.35px;line-height:23.35px;white-space:pre;font-family:'Liberation Mono', monospace;font-size:16.37px;"><span style="color:#808080;">&lt;</span><span style="color:#569cd6;">div</span><span style="color:#dcdcdc;"> </span><span style="color:#9cdcfe;">class</span><span style="color:#b4b4b4;">=</span><span style="color:#c8c8c8;">"d-flex align-items-center"</span><span style="color:#808080;">&gt;</span></div>
<div class="a" style="left:33px;top:583.75px;width:49px;height:23.35px;line-height:23.35px;text-align:right;font-family:'Liberation Mono', monospace;font-size:16.37px;color:#2b91af;">16</div>
<div class="a" style="left:331.00px;top:583.75px;width:1162.0px;overflow:hidden;height:23.35px;line-height:23.35px;white-space:pre;font-family:'Liberation Mono', monospace;font-size:16.37px;"><span style="color:#808080;">&lt;</span><span style="color:#569cd6;">div</span><span style="color:#dcdcdc;"> </span><span style="color:#9cdcfe;">class</span><span style="color:#b4b4b4;">=</span><span style="color:#c8c8c8;">"image-input image-input-outline symbol symbol-60 symbol-xxl-100 mr-5 align-self-start align-self-xxl-center"</span><span style="color:#808080;">&gt;</span></div>
<div class="a" style="left:33px;top:607.10px;width:49px;height:23.35px;line-height:23.35px;text-align:right;font-family:'Liberation Mono', monospace;font-size:16.37px;color:#2b91af;">17</div>
<div class="a" style="left:370.28px;top:607.2px;width:9.82px;height:22.05px;background:#c9c283;"></div>
<div class="a" style="left:380.1px;top:607.2px;width:540.1px;height:22.05px;background:#d6d37c;"></div>
<div class="a" style="left:370.28px;top:607.10px;width:1122.7px;overflow:hidden;height:23.35px;line-height:23.35px;white-space:pre;font-family:'Liberation Mono', monospace;font-size:16.37px;"><span style="color:#000;">@</span><span style="color:#000;">if (!string.IsNullOrEmpty(Model.UserDetail.PictureUrl))</span></div>
<div class="a" style="left:33px;top:630.45px;width:49px;height:23.35px;line-height:23.35px;text-align:right;font-family:'Liberation Mono', monospace;font-size:16.37px;color:#2b91af;">18</div>
<div class="a" style="left:370.28px;top:629.25px;width:9.82px;height:23.35px;background:#464646;"></div>
<div class="a" style="left:370.28px;top:630.45px;width:1122.7px;overflow:hidden;height:23.35px;line-height:23.35px;white-space:pre;font-family:'Liberation Mono', monospace;font-size:16.37px;"><span style="color:#dcdcdc;">{</span></div>
<div class="a" style="left:33px;top:653.80px;width:49px;height:23.35px;line-height:23.35px;text-align:right;font-family:'Liberation Mono', monospace;font-size:16.37px;color:#2b91af;">19</div>
<div class="a" style="left:507.76px;top:653.4px;width:9.82px;height:20.35px;background:#dad792;"></div>
<div class="a" style="left:517.58px;top:652.6px;width:265.14px;height:23.35px;background:#464646;"></div>
<div class="a" style="left:851.46px;top:653.4px;width:9.82px;height:20.35px;background:#dad792;"></div>
<div class="a" style="left:861.28px;top:652.6px;width:245.5px;height:23.35px;background:#464646;"></div>
<div class="a" style="left:409.56px;top:653.80px;width:1083.4px;overflow:hidden;height:23.35px;line-height:23.35px;white-space:pre;font-family:'Liberation Mono', monospace;font-size:16.37px;"><span style="color:#808080;">&lt;</span><span style="color:#569cd6;">img</span><span style="color:#dcdcdc;"> </span><span style="color:#9cdcfe;">src</span><span style="color:#b4b4b4;">=</span><span style="color:#c8c8c8;">"</span><span style="color:#000;">@</span><span style="color:#dcdcdc;">Model.UserDetail.PictureUrl</span><span style="color:#c8c8c8;">"</span><span style="color:#dcdcdc;"> </span><span style="color:#9cdcfe;">alt</span><span style="color:#b4b4b4;">=</span><span style="color:#c8c8c8;">"</span><span style="color:#000;">@</span><span style="color:#dcdcdc;">Model.UserDetail.FullName</span><span style="color:#c8c8c8;">"</span><span style="color:#dcdcdc;"> </span><span style="color:#808080;">/&gt;</span></div>
<div class="a" style="left:33px;top:677.15px;width:49px;height:23.35px;line-height:23.35px;text-align:right;font-family:'Liberation Mono', monospace;font-size:16.37px;color:#2b91af;">20</div>
<div class="a" style="left:370.28px;top:675.95px;width:9.82px;height:23.35px;background:#464646;"></div>
<div class="a" style="left:370.28px;top:677.15px;width:1122.7px;overflow:hidden;height:23.35px;line-height:23.35px;white-space:pre;font-family:'Liberation Mono', monospace;font-size:16.37px;"><span style="color:#dcdcdc;">}</span></div>
<div class="a" style="left:33px;top:700.50px;width:49px;height:23.35px;line-height:23.35px;text-align:right;font-family:'Liberation Mono', monospace;font-size:16.37px;color:#2b91af;">21</div>
<div class="a" style="left:370.28px;top:699.3px;width:39.28px;height:23.35px;background:#464646;"></div>
<div class="a" style="left:370.28px;top:700.50px;width:1122.7px;overflow:hidden;height:23.35px;line-height:23.35px;white-space:pre;font-family:'Liberation Mono', monospace;font-size:16.37px;"><span style="color:#d8a0df;">else</span></div>
<div class="a" style="left:33px;top:723.85px;width:49px;height:23.35px;line-height:23.35px;text-align:right;font-family:'Liberation Mono', monospace;font-size:16.37px;color:#2b91af;">22</div>
<div class="a" style="left:370.28px;top:722.65px;width:9.82px;height:23.35px;background:#464646;"></div>
<div class="a" style="left:370.28px;top:723.85px;width:1122.7px;overflow:hidden;height:23.35px;line-height:23.35px;white-space:pre;font-family:'Liberation Mono', monospace;font-size:16.37px;"><span style="color:#dcdcdc;">{</span></div>
<div class="a" style="left:33px;top:747.20px;width:49px;height:23.35px;line-height:23.35px;text-align:right;font-family:'Liberation Mono', monospace;font-size:16.37px;color:#2b91af;">23</div>
<div class="a" style="left:998.76px;top:746.8px;width:9.82px;height:20.35px;background:#dad792;"></div>
<div class="a" style="left:1008.58px;top:746.0px;width:245.5px;height:23.35px;background:#464646;"></div>
<div class="a" style="left:409.56px;top:747.20px;width:1083.4px;overflow:hidden;height:23.35px;line-height:23.35px;white-space:pre;font-family:'Liberation Mono', monospace;font-size:16.37px;"><span style="color:#808080;">&lt;</span><span style="color:#569cd6;">img</span><span style="color:#dcdcdc;"> </span><span style="color:#9cdcfe;">src</span><span style="color:#b4b4b4;">=</span><span style="color:#c8c8c8;">"~/theme/metronicnew/media/users/default.jpg"</span><span style="color:#dcdcdc;"> </span><span style="color:#9cdcfe;">alt</span><span style="color:#b4b4b4;">=</span><span style="color:#c8c8c8;">"</span><span style="color:#000;">@</span><span style="color:#dcdcdc;">Model.UserDetail.FullName</span><span style="color:#c8c8c8;">"</span><span style="color:#dcdcdc;"> </span><span style="color:#808080;">/&gt;</span></div>
<svg class="a" style="left:13.5px;top:610.5px;" width="16" height="15" viewBox="0 0 16 15"><path d="M0.8 4.5H8V0.9L15.2 7.5L8 14.1V10.5H0.8Z" fill="#ffd83d" stroke="#b08a24" stroke-width="1.1"/></svg>
<svg class="a" style="left:940px;top:607.8px;" width="22" height="22" viewBox="0 0 22 22"><circle cx="11" cy="11" r="10.2" fill="#e51400" stroke="#fff" stroke-width="1.4"/><path d="M6.8 6.8L15.2 15.2M15.2 6.8L6.8 15.2" stroke="#fff" stroke-width="2.8"/></svg>
<div class="a" style="left:9px;top:767.5px;width:1508.5px;height:22.5px;background:#3e3e42;"></div>
<div class="a" style="left:10px;top:769px;width:73px;height:19.5px;background:#333337;border:1px solid #434346;"></div>
<div class="a t" id="t47" style="transform:scaleX(0.9174);left:13px;top:767.70px;height:21px;line-height:21px;font-size:15px;color:#f1f1f1;">110 %</div>
<svg class="a" style="left:73px;top:777.5px;" width="7" height="4" viewBox="0 0 7 4"><path d="M0 0H7L3.5 4Z" fill="#f1f1f1"/></svg>
<svg class="a" style="left:112.5px;top:770px;" width="17" height="17" viewBox="0 0 17 17"><circle cx="8.5" cy="8.5" r="7.8" fill="#1f9d3a" stroke="#e8f5ea" stroke-width="1.2"/><path d="M4.5 8.8L7.5 11.6L12.5 5.8" fill="none" stroke="#fff" stroke-width="2"/></svg>
<div class="a t" id="t48" style="transform:scaleX(0.8998);left:134.5px;top:767.70px;height:21px;line-height:21px;font-size:15px;color:#f1f1f1;">No issues found</div>
<svg class="a" style="left:334.5px;top:773.5px;" width="6" height="10" viewBox="0 0 6 10"><path d="M6 0V10L0 5Z" fill="#999"/></svg>
<div class="a" style="left:348px;top:773px;width:473px;height:11px;background:#686868;"></div>
<svg class="a" style="left:1259px;top:773.5px;" width="6" height="10" viewBox="0 0 6 10"><path d="M0 0V10L6 5Z" fill="#999"/></svg>
<div class="a t" id="t49" style="transform:scaleX(0.8965);left:1300px;top:767.70px;height:21px;line-height:21px;font-size:15px;color:#f1f1f1;">Ln: 12</div>
<div class="a t" id="t50" style="transform:scaleX(0.8891);left:1361px;top:767.70px;height:21px;line-height:21px;font-size:15px;color:#f1f1f1;">Ch: 27</div>
<div class="a t" id="t51" style="transform:scaleX(0.7781);left:1425px;top:767.70px;height:21px;line-height:21px;font-size:15px;color:#f1f1f1;">SPC</div>
<div class="a t" id="t52" style="transform:scaleX(0.7863);left:1474.2px;top:767.70px;height:21px;line-height:21px;font-size:15px;color:#f1f1f1;">CRLF</div>
<div class="a" style="left:9px;top:231px;width:1508.5px;height:2px;background:#68217a;"></div>
<div class="a" style="left:932.5px;top:256px;width:549.5px;height:333.5px;background:#252526;border:1px solid #303033;box-shadow:0 1px 5px rgba(0,0,0,.4);"></div>
<div class="a" style="left:932.5px;top:256px;width:549.5px;height:33.7px;background:#2d2d30;"></div>
<div class="a" style="left:951px;top:589.5px;width:531px;height:4px;background:#1e1e1e;"></div>
<svg class="a" style="left:950.5px;top:589.5px;" width="10" height="17" viewBox="0 0 10 17"><path d="M0 0H9.5L0 16.5Z" fill="#303033"/></svg>
<div class="a t" id="t53" style="transform:scaleX(0.9016);left:946px;top:263.10px;height:25px;line-height:25px;font-size:18px;color:#f1f1f1;">Exception Thrown</div>
<svg class="a" style="left:1433px;top:266px;" width="10" height="16" viewBox="0 0 10 16"><path d="M2 0.8H8M2.8 0.8V8.5H7.2V0.8M6 0.8V8.5M0.5 8.8H9.5M5 8.8V16" fill="none" stroke="#c8c8c8" stroke-width="1.5"/></svg>
<svg class="a" style="left:1457px;top:266.5px;" width="18" height="15" viewBox="0 0 18 15"><path d="M1.2 1L16.8 14M16.8 1L1.2 14" stroke="#c8c8c8" stroke-width="3.1"/></svg>
<div class="a t" id="t54" style="transform:scaleX(0.9097);left:947px;top:302.20px;height:24px;line-height:24px;font-size:17.5px;color:#f1f1f1;font-weight:700;">System.NullReferenceException:</div>
<div class="a t" id="t55" style="transform:scaleX(0.9423);left:1202px;top:302.20px;height:24px;line-height:24px;font-size:17.5px;color:#f1f1f1;">'Object reference not set to an</div>
<div class="a t" id="t56" style="transform:scaleX(0.9388);left:947px;top:324.20px;height:24px;line-height:24px;font-size:17.5px;color:#f1f1f1;">instance of an object.'</div>
<div class="a t" id="t57" style="transform:scaleX(0.9260);left:947px;top:367.70px;height:24px;line-height:24px;font-size:17.5px;color:#f1f1f1;">Renter.MvcApp.ViewModels.Account.UserProfileViewModel.UserDetai</div>
<div class="a t" id="t58" style="transform:scaleX(0.9506);left:947px;top:389.70px;height:24px;line-height:24px;font-size:17.5px;color:#f1f1f1;">l.<b>get</b> returned null.</div>
<div class="a t" id="t59" style="transform:scaleX(0.9211);left:947px;top:427.70px;height:24px;line-height:24px;font-size:17.5px;color:#0a95fa;">View Details</div>
<div class="a" style="left:1044px;top:429px;width:1.5px;height:21px;background:#8a8a8a;"></div>
<div class="a t" id="t60" style="transform:scaleX(0.9172);left:1053.2px;top:427.70px;height:24px;line-height:24px;font-size:17.5px;color:#0a95fa;">Copy Details</div>
<div class="a" style="left:1153px;top:429px;width:1.5px;height:21px;background:#8a8a8a;"></div>
<div class="a t" id="t61" style="transform:scaleX(0.8762);left:1162.5px;top:427.70px;height:24px;line-height:24px;font-size:17.5px;color:#0a95fa;">Start Live Share session...</div>
<svg class="a" style="left:947.5px;top:464.5px;" width="10" height="9" viewBox="0 0 10 9"><path d="M0 9H10V0Z" fill="#f1f1f1"/></svg>
<div class="a t" id="t62" style="transform:scaleX(0.9210);left:963.8px;top:458.70px;height:24px;line-height:24px;font-size:17.5px;color:#f1f1f1;">Exception Settings</div>
<div class="a" style="left:965px;top:486px;width:16px;height:16px;background:#252526;border:1px solid #c8c8c8;"></div>
<svg class="a" style="left:967.5px;top:488.5px;" width="11" height="11" viewBox="0 0 11 11"><path d="M1 6L4 9.5L10 1" fill="none" stroke="#f1f1f1" stroke-width="1.8"/></svg>
<div class="a t" id="t63" style="transform:scaleX(0.9397);left:988.4px;top:481.20px;height:24px;line-height:24px;font-size:17.5px;color:#f1f1f1;">Break when this exception type is thrown</div>
<div class="a t" id="t64" style="transform:scaleX(0.9406);left:988.4px;top:504.70px;height:24px;line-height:24px;font-size:17.5px;color:#f1f1f1;">Except when thrown from:</div>
<div class="a" style="left:990px;top:532px;width:16px;height:16px;background:#252526;border:1px solid #c8c8c8;"></div>
<div class="a t" id="t65" style="transform:scaleX(0.9175);left:1013.4px;top:527.40px;height:24px;line-height:24px;font-size:17.5px;color:#f1f1f1;">Renter.MvcApp.Views.dll</div>
<div class="a t" id="t66" style="transform:scaleX(0.9256);left:964.7px;top:554.20px;height:24px;line-height:24px;font-size:17.5px;color:#0a95fa;">Open Exception Settings</div>
<div class="a" style="left:1151.5px;top:556px;width:1.5px;height:21px;background:#8a8a8a;"></div>
<div class="a t" id="t67" style="transform:scaleX(0.9361);left:1160.8px;top:554.20px;height:24px;line-height:24px;font-size:17.5px;color:#0a95fa;">Edit Conditions</div>
<div class="a" style="left:683.5px;top:628px;width:548.5px;height:24.5px;background:#39393b;border:1px solid #4f4f52;"></div>
<svg class="a" style="left:691px;top:636px;" width="8" height="8" viewBox="0 0 8 8"><path d="M0 8H8V0Z" fill="#8a8a8a"/></svg>
<svg class="a" style="left:706px;top:631.5px;" width="17" height="17" viewBox="0 0 17 17"><path d="M15.8 4.2 L12.6 7.4 L9.6 4.4 L12.8 1.2 A5 5 0 0 0 6.6 7.6 L0.9 13.3 A1.9 1.9 0 0 0 3.7 16.1 L9.4 10.4 A5 5 0 0 0 15.8 4.2 Z" fill="#9a9a9a"/></svg>
<div class="a t" id="t68" style="transform:scaleX(1.0181);left:729.4px;top:628.70px;height:21px;line-height:21px;font-size:15px;color:#7a7a7a;">Model</div>
<div class="a t" id="t69" style="transform:scaleX(0.9868);left:801px;top:628.70px;height:21px;line-height:21px;font-size:15px;color:#7a7a7a;">{Renter.MvcApp.ViewModels.Account.UserProfileViewModel}</div>
<svg class="a" style="left:1210px;top:635px;" width="16" height="10" viewBox="0 0 16 10"><path d="M0 5H6M6 1.2V8.8M6.5 2.5H14.5V7H6.5M6.5 6H14.5" fill="none" stroke="#8a8a8a" stroke-width="1.3"/></svg>
<div class="a" style="left:704px;top:650.5px;width:177px;height:26.5px;background:#424245;border:1px solid #5d5d60;"></div>
<svg class="a" style="left:706px;top:654.5px;" width="17" height="17" viewBox="0 0 17 17"><path d="M15.8 4.2 L12.6 7.4 L9.6 4.4 L12.8 1.2 A5 5 0 0 0 6.6 7.6 L0.9 13.3 A1.9 1.9 0 0 0 3.7 16.1 L9.4 10.4 A5 5 0 0 0 15.8 4.2 Z" fill="#e8e8e8"/></svg>
<div class="a t" id="t70" style="transform:scaleX(0.9667);left:730.3px;top:652.00px;height:21px;line-height:21px;font-size:15px;color:#f1f1f1;">UserDetail</div>
<div class="a" style="left:821.5px;top:651.5px;width:1px;height:24.5px;background:#5d5d60;"></div>
<div class="a t" id="t71" style="transform:scaleX(0.9718);left:828.8px;top:652.00px;height:21px;line-height:21px;font-size:15px;color:#f1f1f1;">null</div>
<div class="a" style="left:1527px;top:152px;width:386px;height:613px;background:#252526;border:1px solid #3f3f46;"></div>
<div class="a" style="left:1528px;top:153px;width:384px;height:27.5px;background:#2d2d30;"></div>
<div class="a t" id="t72" style="transform:scaleX(1.0032);left:1531.5px;top:155.40px;height:21px;line-height:21px;font-size:15px;color:#d0d0d0;">Diagnostic Tools</div>
<div class="a" style="left:1651px;top:163.5px;width:189px;height:5px;background-image:radial-gradient(#46464a 0.55px,transparent 0.8px),radial-gradient(#46464a 0.55px,transparent 0.8px);background-size:4px 4px;background-position:0 0,2px 2px;"></div>
<svg class="a" style="left:1851px;top:163.5px;" width="9" height="5" viewBox="0 0 9 5"><path d="M0 0H9L4.5 5Z" fill="#f1f1f1"/></svg>
<svg class="a" style="left:1871px;top:159.5px;" width="9" height="13" viewBox="0 0 9 13"><path d="M1.8 0.7H7.2M2.5 0.7V7.5H6.5V0.7M5.4 0.7V7.5M0.3 7.7H8.7M4.5 7.7V13" fill="none" stroke="#f1f1f1" stroke-width="1.3"/></svg>
<svg class="a" style="left:1892px;top:161.5px;" width="11" height="10" viewBox="0 0 11 10"><path d="M0.8 0.5L10.2 9.5M10.2 0.5L0.8 9.5" stroke="#f1f1f1" stroke-width="1.7"/></svg>
<div class="a" style="left:1527px;top:180.8px;width:364px;height:72.7px;background:#fdfbc8;"></div>
<svg class="a" style="left:1534.2px;top:189px;" width="18" height="18" viewBox="0 0 18 18"><circle cx="9" cy="9" r="8.7" fill="#1ba1e2"/><rect x="7.7" y="7.2" width="2.6" height="6.8" fill="#fff"/><rect x="7.7" y="3.6" width="2.6" height="2.5" fill="#fff"/></svg>
<div class="a t" id="t73" style="transform:scaleX(0.9844);left:1560px;top:187.70px;height:21px;line-height:21px;font-size:15px;color:#1e1e1e;">Multiple processes have been debugged. This</div>
<div class="a t" id="t74" style="transform:scaleX(0.9919);left:1560px;top:207.50px;height:21px;line-height:21px;font-size:15px;color:#1e1e1e;">window only shows data for AuthServer.exe</div>
<div class="a t" id="t75" style="transform:scaleX(0.9127);left:1560px;top:227.20px;height:21px;line-height:21px;font-size:15px;color:#1e1e1e;">(PID: 340).</div>
<svg class="a" style="left:1872px;top:193.3px;" width="10" height="9" viewBox="0 0 10 9"><path d="M0.7 0.5L9.3 8.5M9.3 0.5L0.7 8.5" stroke="#1e1e1e" stroke-width="1.5"/></svg>
<div class="a" style="left:1891px;top:181px;width:21.5px;height:348.5px;background:#3e3e42;"></div>
<svg class="a" style="left:1894px;top:194px;" width="16" height="13" viewBox="0 0 16 13"><path d="M1 11L8 3.5L15 11" fill="none" stroke="#999" stroke-width="3"/></svg>
<svg class="a" style="left:1894px;top:500.5px;" width="16" height="13" viewBox="0 0 16 13"><path d="M1 2L8 9.5L15 2" fill="none" stroke="#999" stroke-width="3"/></svg>
<div class="a" style="left:1893px;top:214px;width:17.5px;height:195px;background:#686868;"></div>
<div class="a" style="left:1528px;top:253.5px;width:363px;height:35.5px;background:#2d2d30;"></div>
<svg class="a" style="left:1539.5px;top:261.5px;" width="20" height="20" viewBox="0 0 20 20"><g fill="none" stroke="#e8e8e8"><circle cx="10" cy="10" r="2.6" stroke-width="1.5"/><path d="M8.5 1.2H11.5L12 3.6L14 4.5L16 3.2L18 5.2L16.6 7.2L17.5 9L19.2 9.5V11.5L17 12L16.3 14L17.7 16L15.7 18L13.7 16.7L12 17.5L11.5 19.3H8.5L8 17.4L6 16.6L4.2 18L2.2 16L3.5 14L2.7 12L0.8 11.5V8.5L2.8 8L3.6 6L2.2 4.2L4.2 2.2L6.2 3.5L8 2.8Z" stroke-width="1.3"/></g></svg>
<div class="a" style="left:1572px;top:256px;width:1px;height:29px;background:#3f3f46;"></div>
<svg class="a" style="left:1581.5px;top:261.5px;" width="21" height="20" viewBox="0 0 21 20"><path d="M13 4.5V1H1V19H13V15.5M3.5 3.5H10.5M3.5 16.5H10.5" fill="none" stroke="#e8e8e8" stroke-width="1.5"/><path d="M6 8H13V4.5L20 10L13 15.5V12H6Z" fill="#1b6ec2" stroke="#f1f1f1" stroke-width="1"/></svg>
<div class="a" style="left:1614.5px;top:256px;width:1px;height:29px;background:#3f3f46;"></div>
<svg class="a" style="left:1624.5px;top:261.5px;" width="19" height="19" viewBox="0 0 19 19"><circle cx="7" cy="7" r="5.6" fill="#2d2d30" stroke="#e8e8e8" stroke-width="1.6"/><path d="M11 11L17 17.5" stroke="#e8e8e8" stroke-width="3.2" stroke-linecap="round"/><path d="M12 12.2L16.5 17" stroke="#2d2d30" stroke-width="0.9"/><path d="M4 7H10" stroke="#3a96dd" stroke-width="1.8"/><path d="M7 4V10" stroke="#3a96dd" stroke-width="1.8"/></svg>
<svg class="a" style="left:1657px;top:261.5px;" width="19" height="19" viewBox="0 0 19 19"><circle cx="7" cy="7" r="5.6" fill="#2d2d30" stroke="#e8e8e8" stroke-width="1.6"/><path d="M11 11L17 17.5" stroke="#e8e8e8" stroke-width="3.2" stroke-linecap="round"/><path d="M12 12.2L16.5 17" stroke="#2d2d30" stroke-width="0.9"/><path d="M4 7H10" stroke="#3a96dd" stroke-width="1.8"/></svg>
<svg class="a" style="left:1687px;top:261.5px;" width="19" height="19" viewBox="0 0 19 19"><path d="M6.5 8.5H10V18.5H6.5ZM10.5 11.5H14V18.5H10.5ZM14.5 13.5H18V18.5H14.5ZM2.5 12H6V18.5H2.5Z" fill="none" stroke="#e8e8e8" stroke-width="1.2"/><path d="M1.5 4Q2 0.8 5 1Q8 1.5 7 4.2Q5 5.6 5 7.5" fill="none" stroke="#e8e8e8" stroke-width="1.8"/><rect x="4" y="9" width="2" height="2" fill="#e8e8e8"/></svg>
<div class="a t" id="t76" style="transform:scaleX(0.9218);left:1539.8px;top:290.40px;height:21px;line-height:21px;font-size:15px;color:#f1f1f1;font-weight:700;">Diagnostics session: 4:59 minutes</div>
<div class="a" style="left:1528px;top:315px;width:363px;height:1px;background:#4a4a4d;"></div>
<div class="a" style="left:1528px;top:343px;width:363px;height:1px;background:#4a4a4d;"></div>
<div class="a" style="left:1648.5px;top:316px;width:1px;height:27px;background:#4a4a4d;"></div>
<div class="a" style="left:1804.4px;top:316px;width:1px;height:27px;background:#4a4a4d;"></div>
<div class="a" style="left:1586.2px;top:338.5px;width:1px;height:4.5px;background:#4a4a4d;"></div>
<div class="a" style="left:1617.5px;top:338.5px;width:1px;height:4.5px;background:#4a4a4d;"></div>
<div class="a" style="left:1680px;top:338.5px;width:1px;height:4.5px;background:#4a4a4d;"></div>
<div class="a" style="left:1711.2px;top:338.5px;width:1px;height:4.5px;background:#4a4a4d;"></div>
<div class="a" style="left:1742.5px;top:338.5px;width:1px;height:4.5px;background:#4a4a4d;"></div>
<div class="a" style="left:1773.7px;top:338.5px;width:1px;height:4.5px;background:#4a4a4d;"></div>
<div class="a" style="left:1835.6px;top:338.5px;width:1px;height:4.5px;background:#4a4a4d;"></div>
<div class="a" style="left:1867px;top:338.5px;width:1px;height:4.5px;background:#4a4a4d;"></div>
<div class="a t" id="t77" style="transform:scaleX(0.9920);left:1651.2px;top:316.20px;height:20px;line-height:20px;font-size:14px;color:#c3c3c3;font-weight:700;">4:50min</div>
<div class="a" style="left:1806px;top:317px;width:39px;height:22px;overflow:hidden;"></div>
<div class="a t" id="t78" style="left:1807px;top:316.20px;height:20px;line-height:20px;font-size:14px;color:#c3c3c3;font-weight:700;width:38px;overflow:hidden;transform:scaleX(0.93);">5:00min</div>
<div class="a" style="left:1567px;top:316px;width:6px;height:27px;background:#f1f1f1;"></div>
<div class="a" style="left:1845px;top:316px;width:6px;height:27px;background:#f1f1f1;"></div>
<svg class="a" style="left:1533.3px;top:351.3px;" width="10" height="10" viewBox="0 0 10 10"><path d="M0.7 9.3H9.3V0.7Z" fill="#a0a0a0" stroke="#d0d0d0" stroke-width="0.8"/></svg>
<div class="a t" id="t79" style="transform:scaleX(0.8800);left:1548.7px;top:345.70px;height:21px;line-height:21px;font-size:15px;color:#f1f1f1;font-weight:700;">Events</div>
<div class="a" style="left:1572px;top:369.3px;width:274px;height:57.4px;border:1px solid #555558;"></div>
<div class="a" style="left:1648.5px;top:370px;width:1px;height:56px;background:#333336;"></div>
<div class="a" style="left:1804.4px;top:370px;width:1px;height:56px;background:#333336;"></div>
<div class="a" style="left:1573px;top:398.8px;width:272px;height:1px;background:#b0b0b0;"></div>
<div class="a" style="left:1573px;top:376px;width:219.6px;height:17px;background:#717171;"></div>
<svg class="a" style="left:1548.7px;top:375px;" width="14" height="14" viewBox="0 0 14 14"><path d="M0.7 0.7H13.3V13.3H0.7Z" fill="none" stroke="#f1f1f1" stroke-width="1.4"/><path d="M5 3V11M9 3V11" stroke="#f1f1f1" stroke-width="2.2"/></svg>
<svg class="a" style="left:1548.5px;top:402.3px;" width="14" height="20" viewBox="0 0 14 20"><path d="M7 0.8A6 6 0 0 1 10.6 11.5L10 14H4L3.4 11.5A6 6 0 0 1 7 0.8Z" fill="#7a2d8e" stroke="#e9d7f0" stroke-width="1.2"/><path d="M4.5 6L7 10L9.5 6M7 10V13.5" fill="none" stroke="#fff" stroke-width="1"/><path d="M4.3 15.5H9.7M4.8 17.3H9.2M5.8 19H8.2" stroke="#e9d7f0" stroke-width="1.2"/></svg>
<svg class="a" style="left:1533.3px;top:438.3px;" width="10" height="10" viewBox="0 0 10 10"><path d="M0.7 9.3H9.3V0.7Z" fill="#a0a0a0" stroke="#d0d0d0" stroke-width="0.8"/></svg>
<div class="a t" id="t80" style="transform:scaleX(0.9426);left:1548.7px;top:432.70px;height:21px;line-height:21px;font-size:15px;color:#f1f1f1;font-weight:700;">Process Memory (MB)</div>
<svg class="a" style="left:1738.7px;top:435px;" width="16" height="13" viewBox="0 0 16 13"><path d="M0 0H16L8 13Z" fill="#3399ff"/></svg>
<div class="a" style="left:1767.5px;top:435.5px;width:15.5px;height:15.5px;background:#6fa8c8;border-radius:50%;"></div>
<div class="a t" id="t81" style="transform:scaleX(0.9143);left:1786px;top:432.70px;height:21px;line-height:21px;font-size:15px;color:#f1f1f1;">P..</div>
<div class="a" style="left:1572px;top:457.4px;width:274px;height:72.1px;border:1px solid #555558;border-bottom:none;"></div>
<div class="a" style="left:1573px;top:466px;width:220.3px;height:63.5px;background:#5a7d91;"></div>
<div class="a" style="left:1648.5px;top:466px;width:1px;height:63.5px;background:#628598;"></div>
<div class="a" style="left:1804.4px;top:458px;width:1px;height:71px;background:#333336;"></div>
<div class="a t" id="t82" style="transform:scaleX(0.8689);left:1550px;top:457.40px;height:21px;line-height:21px;font-size:15px;color:#f1f1f1;">91</div>
<div class="a t" id="t83" style="transform:scaleX(0.8989);left:1852px;top:457.40px;height:21px;line-height:21px;font-size:15px;color:#f1f1f1;">91</div>
<div class="a" style="left:1527px;top:529.5px;width:386px;height:4px;background:#2d2d30;"></div>
<div class="a" style="left:1527px;top:533px;width:386px;height:29px;background:#1e1e1e;"></div>
<div class="a" style="left:1532px;top:538px;width:76px;height:24px;background:#333337;"></div>
<div class="a t" id="t84" style="transform:scaleX(0.9550);left:1539.5px;top:539.20px;height:21px;line-height:21px;font-size:15px;color:#f1f1f1;">Summary</div>
<div class="a t" id="t85" style="transform:scaleX(0.8962);left:1615.9px;top:539.20px;height:21px;line-height:21px;font-size:15px;color:#f1f1f1;">Events</div>
<div class="a t" id="t86" style="transform:scaleX(0.9734);left:1671.7px;top:539.20px;height:21px;line-height:21px;font-size:15px;color:#f1f1f1;">Memory Usage</div>
<div class="a t" id="t87" style="transform:scaleX(0.8990);left:1785.4px;top:539.20px;height:21px;line-height:21px;font-size:15px;color:#f1f1f1;">CPU Usage</div>
<div class="a" style="left:1527px;top:562px;width:386px;height:3px;background:#2d2d30;"></div>
<div class="a" style="left:1527px;top:565px;width:364px;height:199px;background:#252526;"></div>
<div class="a" style="left:1891px;top:565px;width:21.5px;height:199px;background:#3e3e42;"></div>
<svg class="a" style="left:1894px;top:584.5px;" width="16" height="13" viewBox="0 0 16 13"><path d="M1 11L8 3.5L15 11" fill="none" stroke="#999" stroke-width="3"/></svg>
<svg class="a" style="left:1894px;top:731.5px;" width="16" height="13" viewBox="0 0 16 13"><path d="M1 2L8 9.5L15 2" fill="none" stroke="#999" stroke-width="3"/></svg>
<div class="a" style="left:1893px;top:607.5px;width:17.5px;height:100px;background:#686868;"></div>
<div class="a t" id="t88" style="transform:scaleX(0.8841);left:1538.8px;top:568.40px;height:21px;line-height:21px;font-size:15px;color:#f1f1f1;font-weight:700;">Events</div>
<div class="a" style="left:1527px;top:593.2px;width:364px;height:1px;background:#3f3f46;"></div>
<svg class="a" style="left:1545.5px;top:606.5px;" width="17" height="10" viewBox="0 0 17 10"><g fill="none" stroke="#c8c8c8" stroke-width="1.1"><path d="M0.8 5L4 1.8L7.2 5L4 8.2Z"/><path d="M5.3 5L8.5 1.8L11.7 5L8.5 8.2Z"/><path d="M9.8 5L13 1.8L16.2 5L13 8.2Z"/></g></svg>
<div class="a t" id="t89" style="transform:scaleX(0.9595);left:1572.4px;top:601.20px;height:21px;line-height:21px;font-size:15px;color:#f1f1f1;">Show Events (1 of 1)</div>
<svg class="a" style="left:1548.5px;top:638px;" width="14" height="20" viewBox="0 0 14 20"><path d="M7 0.8A6 6 0 0 1 10.6 11.5L10 14H4L3.4 11.5A6 6 0 0 1 7 0.8Z" fill="#7a2d8e" stroke="#e9d7f0" stroke-width="1.2"/><path d="M4.5 6L7 10L9.5 6M7 10V13.5" fill="none" stroke="#fff" stroke-width="1"/><path d="M4.3 15.5H9.7M4.8 17.3H9.2M5.8 19H8.2" stroke="#e9d7f0" stroke-width="1.2"/></svg>
<div class="a t" id="t90" style="transform:scaleX(0.9854);left:1572.4px;top:636.50px;height:21px;line-height:21px;font-size:15px;color:#f1f1f1;">Application Insights Events (0 of 0)</div>
<div class="a" style="left:1527px;top:664.4px;width:364px;height:1px;background:#3f3f46;"></div>
<div class="a t" id="t91" style="transform:scaleX(0.9595);left:1538.8px;top:668.70px;height:21px;line-height:21px;font-size:15px;color:#f1f1f1;font-weight:700;">Memory Usage</div>
<div class="a" style="left:1527px;top:692.8px;width:364px;height:1px;background:#3f3f46;"></div>
<svg class="a" style="left:1545.5px;top:705.5px;" width="18" height="13" viewBox="0 0 18 13"><path d="M0.7 2.2H5L6 0.7H10L11 2.2H17.3V12.3H0.7Z" fill="none" stroke="#c8c8c8" stroke-width="1.3"/><circle cx="9" cy="7.3" r="2.6" fill="none" stroke="#c8c8c8" stroke-width="1.3"/></svg>
<div class="a t" id="t92" style="transform:scaleX(0.9662);left:1572.4px;top:700.50px;height:21px;line-height:21px;font-size:15px;color:#f1f1f1;">Take Snapshot</div>
<div class="a" style="left:1527px;top:729.5px;width:364px;height:1px;background:#3f3f46;"></div>
<div class="a t" id="t93" style="transform:scaleX(0.9115);left:1538.8px;top:733.10px;height:21px;line-height:21px;font-size:15px;color:#f1f1f1;font-weight:700;">CPU Usage</div>
<div class="a" style="left:1527px;top:757.8px;width:364px;height:1px;background:#3f3f46;"></div>
<div class="a" style="left:1527px;top:764.5px;width:386px;height:1px;background:#3f3f46;"></div>
<div class="a" style="left:1747px;top:764.5px;width:123.5px;height:25px;background:#252526;border:1px solid #3f3f46;border-top:none;"></div>
<div class="a t" id="t94" style="transform:scaleX(0.9953);left:1533px;top:767.10px;height:21px;line-height:21px;font-size:15px;color:#d0d0d0;">Solution Explorer</div>
<div class="a t" id="t95" style="transform:scaleX(0.9461);left:1661px;top:767.10px;height:21px;line-height:21px;font-size:15px;color:#d0d0d0;">Git Changes</div>
<div class="a t" id="t96" style="transform:scaleX(1.0050);left:1754px;top:767.10px;height:21px;line-height:21px;font-size:15px;color:#0e9bff;">Diagnostic Tools</div>
<div class="a" style="left:8px;top:798px;width:1905px;height:195px;background:#2d2d30;border:1px solid #3f3f46;border-bottom:none;"></div>
<div class="a t" id="t97" style="transform:scaleX(0.9450);left:13.8px;top:801.70px;height:21px;line-height:21px;font-size:15px;color:#d0d0d0;">Error List</div>
<div class="a" style="left:81px;top:810px;width:1760px;height:5px;background-image:radial-gradient(#46464a 0.55px,transparent 0.8px),radial-gradient(#46464a 0.55px,transparent 0.8px);background-size:4px 4px;background-position:0 0,2px 2px;"></div>
<svg class="a" style="left:1850.5px;top:809px;" width="9" height="5" viewBox="0 0 9 5"><path d="M0 0H9L4.5 5Z" fill="#f1f1f1"/></svg>
<svg class="a" style="left:1871px;top:805px;" width="9" height="13" viewBox="0 0 9 13"><path d="M1.8 0.7H7.2M2.5 0.7V7.5H6.5V0.7M5.4 0.7V7.5M0.3 7.7H8.7M4.5 7.7V13" fill="none" stroke="#f1f1f1" stroke-width="1.3"/></svg>
<svg class="a" style="left:1891.5px;top:807px;" width="11" height="10" viewBox="0 0 11 10"><path d="M0.8 0.5L10.2 9.5M10.2 0.5L0.8 9.5" stroke="#f1f1f1" stroke-width="1.7"/></svg>
<div class="a" style="left:17.5px;top:829px;width:188px;height:25.5px;background:#333337;border:1px solid #434346;"></div>
<div class="a t" id="t98" style="transform:scaleX(0.9891);left:23.5px;top:830.50px;height:21px;line-height:21px;font-size:15px;color:#f1f1f1;">Entire Solution</div>
<svg class="a" style="left:193.5px;top:840px;" width="7" height="4" viewBox="0 0 7 4"><path d="M0 0H7L3.5 4Z" fill="#999"/></svg>
<div class="a" style="left:214px;top:831px;width:1px;height:22px;background:#3f3f46;"></div>
<div class="a" style="left:220px;top:828.5px;width:87.5px;height:26px;background:#333337;border:1px solid #3399ff;"></div>
<svg class="a" style="left:223px;top:831.5px;" width="20" height="20" viewBox="0 0 20 20"><circle cx="10" cy="10" r="9.2" fill="#e51400" stroke="#fff" stroke-width="1.3"/><path d="M6.3 6.3L13.7 13.7M13.7 6.3L6.3 13.7" stroke="#fff" stroke-width="2.4"/></svg>
<div class="a t" id="t99" style="transform:scaleX(0.9373);left:249px;top:830.50px;height:21px;line-height:21px;font-size:15px;color:#f1f1f1;">0 Errors</div>
<div class="a" style="left:312.5px;top:831px;width:1px;height:22px;background:#3f3f46;"></div>
<div class="a" style="left:318px;top:828.5px;width:118.5px;height:26px;background:#333337;border:1px solid #3399ff;"></div>
<svg class="a" style="left:321px;top:831.5px;" width="20" height="20" viewBox="0 0 20 20"><path d="M10 1.2L19.2 18.5H0.8Z" fill="#ffcc00" stroke="#fff6c8" stroke-width="1.1" stroke-linejoin="round"/><path d="M10 7V13" stroke="#1e1e1e" stroke-width="2.2"/><rect x="8.9" y="14.3" width="2.2" height="2.2" fill="#1e1e1e"/></svg>
<div class="a t" id="t100" style="transform:scaleX(0.9623);left:347.5px;top:830.50px;height:21px;line-height:21px;font-size:15px;color:#f1f1f1;">14 Warnings</div>
<div class="a" style="left:442px;top:831px;width:1px;height:22px;background:#3f3f46;"></div>
<svg class="a" style="left:450px;top:831.5px;" width="20" height="20" viewBox="0 0 20 20"><circle cx="10" cy="10" r="9.2" fill="#1ba1e2" stroke="#fff" stroke-width="1.3"/><rect x="8.7" y="8.3" width="2.6" height="7" fill="#fff"/><rect x="8.7" y="4.3" width="2.6" height="2.6" fill="#fff"/></svg>
<div class="a t" id="t101" style="transform:scaleX(0.9628);left:476px;top:830.50px;height:21px;line-height:21px;font-size:15px;color:#f1f1f1;">0 of 18 Messages</div>
<div class="a" style="left:604px;top:831px;width:1px;height:22px;background:#3f3f46;"></div>
<div class="a" style="left:609px;top:828.5px;width:26.5px;height:26px;background:#333337;border:1px solid #3399ff;"></div>
<svg class="a" style="left:613px;top:833px;" width="18" height="17" viewBox="0 0 18 17"><path d="M1 1L7 7M7 1L1 7" stroke="#e8443a" stroke-width="1.8"/><path d="M6.5 8H17L13 12.5V16.5L10.5 15V12.5Z" fill="#e8e8e8"/></svg>
<div class="a" style="left:650px;top:829px;width:187.5px;height:25.5px;background:#333337;border:1px solid #434346;"></div>
<div class="a t" id="t102" style="transform:scaleX(0.9844);left:655.5px;top:830.50px;height:21px;line-height:21px;font-size:15px;color:#f1f1f1;">Build + IntelliSense</div>
<svg class="a" style="left:825px;top:840px;" width="7" height="4" viewBox="0 0 7 4"><path d="M0 0H7L3.5 4Z" fill="#999"/></svg>
<div class="a" style="left:1662.5px;top:827.5px;width:247px;height:26.5px;background:#333337;border:1px solid #434346;"></div>
<div class="a t" id="t103" style="transform:scaleX(0.9374);left:1668.5px;top:830.50px;height:21px;line-height:21px;font-size:15px;color:#999;">Search Error List</div>
<svg class="a" style="left:1877.5px;top:832px;" width="17" height="17" viewBox="0 0 17 17"><circle cx="11" cy="6" r="4" fill="none" stroke="#f1f1f1" stroke-width="2.4"/><path d="M8 9L2 15" stroke="#f1f1f1" stroke-width="3" stroke-linecap="round"/></svg>
<svg class="a" style="left:1900px;top:840px;" width="7" height="4" viewBox="0 0 7 4"><path d="M0 0H7L3.5 4Z" fill="#c8c8c8"/></svg>
<div class="a" style="left:9px;top:859px;width:1882px;height:108.5px;background:#252526;"></div>
<div class="a" style="left:9px;top:859px;width:1882px;height:26px;background:#252526;"></div>
<div class="a" style="left:42.5px;top:860px;width:1px;height:25px;background:#3f3f46;"></div>
<div class="a" style="left:75px;top:860px;width:1px;height:25px;background:#3f3f46;"></div>
<div class="a" style="left:137.5px;top:860px;width:1px;height:25px;background:#3f3f46;"></div>
<div class="a" style="left:1305px;top:860px;width:1px;height:25px;background:#3f3f46;"></div>
<div class="a" style="left:1492.5px;top:860px;width:1px;height:25px;background:#3f3f46;"></div>
<div class="a" style="left:1680px;top:860px;width:1px;height:25px;background:#3f3f46;"></div>
<div class="a" style="left:1724px;top:860px;width:1px;height:25px;background:#3f3f46;"></div>
<div class="a" style="left:1880px;top:860px;width:1px;height:25px;background:#3f3f46;"></div>
<div class="a" style="left:12px;top:885px;width:1868px;height:1px;background:#3f3f46;"></div>
<svg class="a" style="left:62.5px;top:862.5px;" width="8" height="7" viewBox="0 0 8 7"><path d="M0 0H8M2 2.5H8M4 5H8" stroke="#888" stroke-width="1"/></svg>
<div class="a t" id="t104" style="transform:scaleX(0.9760);left:80px;top:861.20px;height:21px;line-height:21px;font-size:15px;color:#f1f1f1;">Code</div>
<div class="a t" id="t105" style="transform:scaleX(1.0062);left:143.5px;top:861.20px;height:21px;line-height:21px;font-size:15px;color:#f1f1f1;">Description</div>
<div class="a t" id="t106" style="transform:scaleX(0.9960);left:1311px;top:861.20px;height:21px;line-height:21px;font-size:15px;color:#f1f1f1;">Project</div>
<div class="a t" id="t107" style="transform:scaleX(0.9515);left:1499px;top:861.20px;height:21px;line-height:21px;font-size:15px;color:#f1f1f1;">File</div>
<div class="a t" id="t108" style="transform:scaleX(0.9521);left:1686px;top:861.20px;height:21px;line-height:21px;font-size:15px;color:#f1f1f1;">Line</div>
<div class="a t" id="t109" style="transform:scaleX(0.9627);left:1730px;top:861.20px;height:21px;line-height:21px;font-size:15px;color:#f1f1f1;">Suppression State</div>
<svg class="a" style="left:50px;top:898.3px;" width="20" height="20" viewBox="0 0 20 20"><path d="M10 1.2L19.2 18.5H0.8Z" fill="#ffcc00" stroke="#fff6c8" stroke-width="1.1" stroke-linejoin="round"/><path d="M10 7V13" stroke="#1e1e1e" stroke-width="2.2"/><rect x="8.9" y="14.3" width="2.2" height="2.2" fill="#1e1e1e"/></svg>
<div class="a t" id="t110" style="transform:scaleX(0.9037);left:80px;top:898.00px;height:21px;line-height:21px;font-size:15px;color:#0e9bff;">CS1998</div>
<div class="a t" id="t111" style="transform:scaleX(0.9852);left:143.5px;top:888.30px;height:21px;line-height:21px;font-size:15px;color:#f1f1f1;">This async method lacks 'await' operators and will run synchronously. Consider using the 'await' operator to await non-blocking API calls, or 'await Task.Run(...)' to do CPU-bound</div>
<div class="a t" id="t112" style="transform:scaleX(0.9976);left:143.5px;top:907.80px;height:21px;line-height:21px;font-size:15px;color:#f1f1f1;">work on a background thread.</div>
<div class="a t" id="t113" style="transform:scaleX(0.9662);left:1311px;top:898.00px;height:21px;line-height:21px;font-size:15px;color:#f1f1f1;">Renter.DataAccessApi</div>
<div class="a t" id="t114" style="transform:scaleX(0.9819);left:1499px;top:898.00px;height:21px;line-height:21px;font-size:15px;color:#f1f1f1;">ExceptionHandlerFilter.cs</div>
<div class="a t" id="t115" style="transform:scaleX(0.9288);left:1686px;top:898.00px;height:21px;line-height:21px;font-size:15px;color:#f1f1f1;">17</div>
<div class="a t" id="t116" style="transform:scaleX(1.0034);left:1730px;top:898.00px;height:21px;line-height:21px;font-size:15px;color:#f1f1f1;">Active</div>
<svg class="a" style="left:50px;top:943.6px;" width="20" height="20" viewBox="0 0 20 20"><path d="M10 1.2L19.2 18.5H0.8Z" fill="#ffcc00" stroke="#fff6c8" stroke-width="1.1" stroke-linejoin="round"/><path d="M10 7V13" stroke="#1e1e1e" stroke-width="2.2"/><rect x="8.9" y="14.3" width="2.2" height="2.2" fill="#1e1e1e"/></svg>
<div class="a t" id="t117" style="transform:scaleX(0.9037);left:80px;top:943.30px;height:21px;line-height:21px;font-size:15px;color:#0e9bff;">CS1998</div>
<div class="a t" id="t118" style="transform:scaleX(0.9852);left:143.5px;top:933.60px;height:21px;line-height:21px;font-size:15px;color:#f1f1f1;">This async method lacks 'await' operators and will run synchronously. Consider using the 'await' operator to await non-blocking API calls, or 'await Task.Run(...)' to do CPU-bound</div>
<div class="a t" id="t119" style="transform:scaleX(0.9976);left:143.5px;top:953.10px;height:21px;line-height:21px;font-size:15px;color:#f1f1f1;">work on a background thread.</div>
<div class="a t" id="t120" style="transform:scaleX(0.9849);left:1311px;top:943.30px;height:21px;line-height:21px;font-size:15px;color:#f1f1f1;">Renter.MvcApp</div>
<div class="a t" id="t121" style="transform:scaleX(0.9885);left:1499px;top:943.30px;height:21px;line-height:21px;font-size:15px;color:#f1f1f1;">AccountController.cs</div>
<div class="a t" id="t122" style="transform:scaleX(0.9588);left:1686px;top:943.30px;height:21px;line-height:21px;font-size:15px;color:#f1f1f1;">205</div>
<div class="a t" id="t123" style="transform:scaleX(1.0034);left:1730px;top:943.30px;height:21px;line-height:21px;font-size:15px;color:#f1f1f1;">Active</div>
<div class="a" style="left:1891px;top:859px;width:19px;height:108.5px;background:#3e3e42;"></div>
<svg class="a" style="left:1896px;top:867px;" width="10" height="6" viewBox="0 0 10 6"><path d="M0 6H10L5 0Z" fill="#999"/></svg>
<svg class="a" style="left:1896px;top:954.5px;" width="10" height="6" viewBox="0 0 10 6"><path d="M0 0H10L5 6Z" fill="#999"/></svg>
<div class="a" style="left:1895px;top:880px;width:11px;height:10px;background:#686868;"></div>
<div class="a" style="left:8px;top:967.5px;width:1905px;height:25.5px;background:#2d2d30;"></div>
<div class="a" style="left:8px;top:967.5px;width:1905px;height:1px;background:#3f3f46;"></div>
<div class="a" style="left:9px;top:967.5px;width:70.5px;height:25px;background:#252526;border:1px solid #3f3f46;border-top:none;"></div>
<div class="a t" id="t124" style="transform:scaleX(0.9533);left:15px;top:969.70px;height:21px;line-height:21px;font-size:15px;color:#0e9bff;">Error List</div>
<div class="a t" id="t125" style="transform:scaleX(0.9906);left:87px;top:969.70px;height:21px;line-height:21px;font-size:15px;color:#d0d0d0;">Autos</div>
<div class="a t" id="t126" style="transform:scaleX(0.9456);left:139px;top:969.70px;height:21px;line-height:21px;font-size:15px;color:#d0d0d0;">Locals</div>
<div class="a t" id="t127" style="transform:scaleX(0.9639);left:194px;top:969.70px;height:21px;line-height:21px;font-size:15px;color:#d0d0d0;">Watch 1</div>
<div class="a t" id="t128" style="transform:scaleX(0.9983);left:1486px;top:923.40px;height:34px;line-height:34px;font-size:25px;color:rgba(185,185,185,0.55);">Windows'u Etkinleştir</div>
<div class="a t" id="t129" style="transform:scaleX(0.9455);left:1486px;top:957.40px;height:26px;line-height:26px;font-size:19px;color:rgba(185,185,185,0.55);">Windows'u etkinleştirmek için Ayarlar'a gidin.</div>
<div class="a" style="left:0px;top:993px;width:1920px;height:7px;background:#2d2d30;"></div>
<div class="a" style="left:0px;top:1000px;width:1920px;height:30px;background:#ca5100;"></div>
<svg class="a" style="left:4px;top:1009px;" width="21" height="14" viewBox="0 0 21 14"><path d="M4.5 0.8H20L16.5 13.2H1Z" fill="none" stroke="#f1f1f1" stroke-width="1.4"/></svg>
<div class="a t" id="t130" style="transform:scaleX(0.9456);left:35px;top:1004.90px;height:21px;line-height:21px;font-size:15px;color:#fff;">Ready</div>
<svg class="a" style="left:1448px;top:1008.5px;" width="12" height="14" viewBox="0 0 12 14"><path d="M6 14V2M1 7L6 1.5L11 7" fill="none" stroke="#f6dccb" stroke-width="1.8"/></svg>
<div class="a t" id="t131" style="transform:scaleX(0.9588);left:1471px;top:1004.90px;height:21px;line-height:21px;font-size:15px;color:#fff;">0</div>
<svg class="a" style="left:1487.5px;top:1013px;" width="9" height="5" viewBox="0 0 9 5"><path d="M0 5H9L4.5 0Z" fill="#fff"/></svg>
<svg class="a" style="left:1527.5px;top:1008.5px;" width="14" height="14" viewBox="0 0 14 14"><path d="M1 13L1.8 9.2L9.5 1.5L12.5 4.5L4.8 12.2Z" fill="#f6dccb"/><path d="M8.2 2.8L11.2 5.8" stroke="#ca5100" stroke-width="1"/></svg>
<div class="a t" id="t132" style="transform:scaleX(0.9588);left:1551px;top:1004.90px;height:21px;line-height:21px;font-size:15px;color:#fff;">9</div>
<svg class="a" style="left:1587.5px;top:1006.5px;" width="18" height="18" viewBox="0 0 18 18"><path d="M9 0.8L17.2 9L9 17.2L0.8 9Z" fill="#f6dccb"/><path d="M6.5 4L10.5 8M8.8 6.3V12.2M10.5 8H12" stroke="#ca5100" stroke-width="1.3" fill="none"/><circle cx="8.8" cy="12.5" r="1.3" fill="#ca5100"/><circle cx="12.3" cy="8.3" r="1.3" fill="#ca5100"/></svg>
<div class="a t" id="t133" style="transform:scaleX(0.9960);left:1612.5px;top:1004.90px;height:21px;line-height:21px;font-size:15px;color:#fff;">GitHub</div>
<svg class="a" style="left:1666.5px;top:1013px;" width="9" height="5" viewBox="0 0 9 5"><path d="M0 5H9L4.5 0Z" fill="#fff"/></svg>
<svg class="a" style="left:1707.5px;top:1006.5px;" width="18" height="18" viewBox="0 0 18 18"><path d="M9 17V9L3 2.5M9 9L15 2.5" fill="none" stroke="#f6dccb" stroke-width="1.5"/><path d="M11.5 1.5H16V6" fill="none" stroke="#f6dccb" stroke-width="1.5"/><path d="M1.5 4.5V1H5" fill="none" stroke="#f6dccb" stroke-width="1.2"/></svg>
<div class="a t" id="t134" style="transform:scaleX(1.0244);left:1733px;top:1004.90px;height:21px;line-height:21px;font-size:15px;color:#fff;">development</div>
<svg class="a" style="left:1829px;top:1013px;" width="9" height="5" viewBox="0 0 9 5"><path d="M0 5H9L4.5 0Z" fill="#fff"/></svg>
<svg class="a" style="left:1871px;top:1006px;" width="19" height="19" viewBox="0 0 19 19"><path d="M9.5 1.5A5.5 5.5 0 0 1 15 7V11.5L17 14.5H2L4 11.5V7A5.5 5.5 0 0 1 9.5 1.5Z" fill="#f6d2bd"/><path d="M7.5 16A2 2 0 0 0 11.5 16" fill="#f6d2bd"/></svg>
<div class="a" style="left:1882.5px;top:1012.5px;width:15px;height:15px;background:#fff;border-radius:50%;"></div>
<div class="a t" id="t135" style="transform:scaleX(1.0467);left:1886.5px;top:1011.00px;height:17px;line-height:17px;font-size:12px;color:#1e1e1e;">2</div>
<div class="a" style="left:0px;top:1030px;width:1920px;height:50px;background:linear-gradient(90deg,#223944 0%,#213640 45%,#1d2d43 70%,#18223f 100%);"></div>
<svg class="a" style="left:20px;top:1045px;" width="20" height="20" viewBox="0 0 20 20"><path d="M0 2.8L8.2 1.7V9.6H0ZM9.2 1.5L20 0V9.6H9.2ZM0 10.5H8.2V18.4L0 17.3ZM9.2 10.5H20V20L9.2 18.5Z" fill="#fff"/></svg>
<svg class="a" style="left:80px;top:1045px;" width="20" height="20" viewBox="0 0 20 20"><circle cx="12.3" cy="7.7" r="6.3" fill="none" stroke="#fff" stroke-width="1.6"/><path d="M7.8 12.2L0.8 19.2" stroke="#fff" stroke-width="1.8"/></svg>
<svg class="a" style="left:138.5px;top:1040px;" width="30" height="30" viewBox="0 0 30 30"><path d="M9.5 9V5.5Q9.5 1.5 15 1.5Q20.500 1.5 20.500 5.5V9" fill="none" stroke="#e8e8e8" stroke-width="1.8"/><path d="M1 8.500H29V29H1Z" fill="#f3f3f3"/><rect x="9.5" y="14" width="5" height="5" fill="#f25022"/><rect x="15.5" y="14" width="5" height="5" fill="#7fba00"/><rect x="9.5" y="20" width="5" height="5" fill="#00a4ef"/><rect x="15.5" y="20" width="5" height="5" fill="#ffb900"/></svg>
<svg class="a" style="left:200.5px;top:1040px;" width="31" height="30" viewBox="0 0 31 30"><path d="M0.5 12L15.5 1.500L30.500 12V29H0.5Z" fill="#1373c9"/><path d="M4 9.500H27V20H4Z" fill="#eaf3fb"/><path d="M0.5 12L15.500 22L30.500 12V29H0.5Z" fill="#2b97ea"/><path d="M0.5 29L15.500 19.500L30.500 29Z" fill="#1b84dd"/></svg>
<svg class="a" style="left:266px;top:1040px;" width="23" height="30" viewBox="0 0 23 30"><rect x="0.5" y="0.5" width="22" height="29" rx="2" fill="#6e7d8c"/><rect x="3" y="3" width="17" height="6" fill="#4fc3f7"/><g fill="#dfe5ea"><rect x="3" y="11.500" width="4.500" height="4.500"/><rect x="9.200" y="11.500" width="4.500" height="4.500"/><rect x="15.500" y="11.500" width="4.500" height="4.500"/><rect x="3" y="17.500" width="4.500" height="4.500"/><rect x="9.200" y="17.500" width="4.500" height="4.500"/><rect x="3" y="23.500" width="4.500" height="4.500"/><rect x="9.200" y="23.500" width="4.500" height="4.500"/></g><rect x="15.500" y="17.500" width="4.500" height="10.500" fill="#1a3f7a"/></svg>
<svg class="a" style="left:326px;top:1042px;" width="28" height="25" viewBox="0 0 28 25"><path d="M0.5 2Q0.5 0.5 2 0.5H10L12.500 3.500H26Q27.500 3.500 27.500 5V23Q27.500 24.500 26 24.500H2Q0.5 24.500 0.5 23Z" fill="#e8a818"/><path d="M0.5 6.500H27.500V23Q27.500 24.500 26 24.500H2Q0.5 24.500 0.5 23Z" fill="#ffd75e"/><path d="M7 24.500V15.500H21V24.500H17.500V19H10.500V24.500Z" fill="#2d7fd3"/></svg>
<svg class="a" style="left:388px;top:1041px;" width="29" height="28" viewBox="0 0 29 28"><path d="M9 1L28 6.500V19.500L9 14Z" fill="#3a97e0"/><path d="M10.500 3L26.500 7.600V17.500L10.500 12.900Z" fill="#7cc4f5"/><path d="M17 17L20 18V21.500L17 20.500Z" fill="#b8c0c8"/><path d="M1 21L13 18L22 24L9.500 27.500Z" fill="#dfe3e8"/><path d="M4 21.500L12.500 19.500L18.500 23.500L10 25.700Z" fill="#9aa3ad"/></svg>
<svg class="a" style="left:451.5px;top:1040px;" width="24" height="30" viewBox="0 0 24 30"><path d="M12 0.5Q22.500 12 23 19.500Q22.500 29.500 12 29.500Q1.500 29.500 1 19.500Q1.500 12 12 0.5Z" fill="#2c8fef"/><path d="M12 0.5Q19 8 21.500 14Q14 18 4.500 11.500Q7.500 5.500 12 0.5Z" fill="#f7a325"/><path d="M4.500 11.500Q14 18 21.500 14Q23 17 23 20Q14 25 1.500 17Q2.500 14.500 4.500 11.500Z" fill="#e9418f"/><path d="M1.500 17Q14 25 23 20Q22.500 24 20.500 26Q11 28 1.200 21Q1 19 1.500 17Z" fill="#9a4fe0"/></svg>
<svg class="a" style="left:511px;top:1040px;" width="30" height="30" viewBox="0 0 30 30"><circle cx="15" cy="15" r="14.500" fill="#1f8fdb"/><path d="M15 0.5A14.500 14.500 0 0 1 29.500 15Q29.500 20.500 24 20.500Q19 20.500 19 17Q19 12 13 11Q6 11 1.500 20A14.500 14.500 0 0 1 15 0.5Z" fill="#3ecf8e"/><path d="M1 18Q2 8.500 13 8.500Q22 9 22 16Q22 18.500 19.500 19Q19 12.500 12 12.500Q5 13 3.500 23.500Q1.500 21 1 18Z" fill="#1262b3"/><path d="M9.500 17Q9.500 25 18 26.500Q23 27 26.500 23.500Q22.500 30 14 29.400Q5 28 3.500 20Q5.500 14.500 10.500 14Q9.500 15.500 9.500 17Z" fill="#0d4f9e"/></svg>
<svg class="a" style="left:573px;top:1040px;" width="30" height="30" viewBox="0 0 30 30"><circle cx="15" cy="16" r="13.500" fill="#ff9a1f"/><path d="M15 2.500Q17 0.500 20.500 0.500Q20 3 22.500 5.500Q28.500 10.500 28.500 16A13.500 13.500 0 0 1 15 29.500A13.500 13.500 0 0 1 1.500 16Q1.500 10 5 6.500Q5 9 6.500 10Q9 4.500 15 2.500Z" fill="#ff6a1a"/><path d="M8 5Q11 3.500 13 6Q17.500 6 19 10Q14 9 12.500 12L8.500 11Q6.500 8 8 5Z" fill="#ffd23d"/><circle cx="15.500" cy="16.500" r="6.800" fill="#7b3fd4"/><path d="M9 14Q12.500 11.500 16 13.500Q19.500 14.500 20 12Q23 16 20.500 20.500Q17 24.500 12 22.500Q8 20 9 14Z" fill="#5b2bb0"/><path d="M2 18Q4 24 10 25Q17 26 21 20Q20 28 13 28.500Q4.500 27 2 18Z" fill="#ff3d5a"/></svg>
<svg class="a" style="left:636px;top:1041.5px;" width="27" height="27" viewBox="0 0 27 27"><circle cx="13.500" cy="13.500" r="13.300" fill="#fbc116"/><path d="M13.500 13.500L1.950 6.850A13.300 13.300 0 0 1 25.050 6.850Z" fill="#e33b2e"/><path d="M13.500 13.500L1.950 6.850A13.300 13.300 0 0 0 13.500 26.800L19.300 16.800Z" fill="#229f4b"/><path d="M13.500 7H25.100" stroke="#e33b2e" stroke-width="0.1"/><circle cx="13.500" cy="13.500" r="6.200" fill="#f1f1f1"/><circle cx="13.500" cy="13.500" r="4.900" fill="#3f86f4"/></svg>
<svg class="a" style="left:696.5px;top:1040px;" width="32" height="31" viewBox="0 0 32 31"><circle cx="14.500" cy="14.500" r="14.300" fill="#5865f2"/><path d="M8 9Q11 7.500 12.500 7.500L13 8.500Q14.500 8.200 16 8.500L16.500 7.500Q18 7.500 21 9Q24 14 23.500 19.500Q21.500 21.500 19 22L18 20.300Q14.500 21.500 11 20.300L10 22Q7.500 21.500 5.500 19.500Q5 14 8 9Z" fill="#fff"/><ellipse cx="11.300" cy="15.500" rx="1.900" ry="2.200" fill="#5865f2"/><ellipse cx="17.700" cy="15.500" rx="1.900" ry="2.200" fill="#5865f2"/><circle cx="23" cy="22.500" r="8" fill="#e8344a"/></svg>
<div class="a t" id="t136" style="transform:scaleX(0.9498);left:717px;top:1053.50px;height:17px;line-height:17px;font-size:12px;color:#fff;font-weight:700;">9+</div>
<svg class="a" style="left:759px;top:1040px;" width="32" height="32" viewBox="0 0 32 32"><circle cx="19" cy="5.500" r="4.500" fill="#7b83eb"/><circle cx="27" cy="8.500" r="3.200" fill="#5059c9"/><path d="M22 12H31V20.500Q31 25 26.500 25Q24 25 22 23Z" fill="#5059c9"/><path d="M9 11.500H24.500V22.500Q24.500 29 17 29Q9 29 9 22.500Z" fill="#7b83eb"/><rect x="0.500" y="7" width="15.500" height="15.500" rx="1.500" fill="#4b53bc"/><path d="M4.500 11H12M8.200 11V19" stroke="#fff" stroke-width="2.200"/><circle cx="25" cy="26" r="5.800" fill="#fff"/><circle cx="25" cy="26" r="4.800" fill="#6bb700"/><path d="M22.500 26L24.300 28L27.600 24.200" fill="none" stroke="#fff" stroke-width="1.500"/></svg>
<svg class="a" style="left:820px;top:1040px;" width="31" height="30" viewBox="0 0 31 30"><path d="M1.500 21Q1 13 9 11Q13 10.500 15 13L12.500 16Q10.500 14.500 8 15.500Q5 17.500 6.500 21.500Z" fill="#e23b2e"/><path d="M3.500 23Q3 16 10 14.500L12.500 16Q8 17 8.500 23.500Z" fill="#f4b41a"/><path d="M6 25Q6 19 11.500 18L13 20Q10 21 10.500 25.500Z" fill="#3a7de0"/><circle cx="19.500" cy="10" r="8.500" fill="#3b6fd0"/><path d="M14 5Q17 2 21 2.500Q24 4 23.500 6Q20 7.500 18 10.500Q15 11 13 9Q12.500 7 14 5Z" fill="#55b53f"/><path d="M20 12Q24 10 27 12Q27 15.500 24 17.500Q21 16 20 12Z" fill="#55b53f"/><path d="M8 17.500L30 20.500L17 29L18 23.500Z" fill="#35b02a" stroke="#0d5d0d" stroke-width="0.800"/></svg>
<svg class="a" style="left:883px;top:1040.5px;" width="30" height="29" viewBox="0 0 30 29"><path d="M21.500 0.500L29.500 4V25L21.500 28.500L7 15.500L2.500 19L0.500 17.800V11.200L2.500 10L7 13.500Z" fill="#2b9ce6"/><path d="M21.500 0.500L29.500 4V25L21.500 28.500Z" fill="#1f7fc7"/><path d="M21.500 8.500L12.500 14.500L21.500 20.500Z" fill="#1e2f3f"/></svg>
<svg class="a" style="left:945px;top:1040.5px;" width="30" height="29" viewBox="0 0 30 29"><path d="M21.500 0.500L29.500 4V25L21.500 28.500L8 17L3 21L0.500 19.800V9.200L3 8L8 12Z" fill="#8f5fd6"/><path d="M21.500 0.500L29.500 4V25L21.500 28.500Z" fill="#b48bea"/><path d="M21.500 8.500L13.500 14.500L21.500 20.500Z" fill="#1e2f3f"/><path d="M3 11.500V17.500L6 14.500Z" fill="#1e2f3f"/></svg>
<svg class="a" style="left:1007px;top:1040px;" width="30" height="30" viewBox="0 0 30 30"><circle cx="15" cy="15" r="14" fill="#fdfdfd" stroke="#3aa9b5" stroke-width="1.800"/><path d="M10 28.300L12.500 21.500Q14 18.800 16.500 20.500L18.500 22L20.500 19.500L22 24.500L19.500 28.800Q15 30 10 28.300Z" fill="#33221c"/><path d="M4.500 14Q5 8 11 5.500Q16 3.800 19.500 6" fill="none" stroke="#33221c" stroke-width="1"/><path d="M5 15.500Q3.800 12.500 6 11" fill="none" stroke="#33221c" stroke-width="1.100"/><ellipse cx="20.600" cy="9.800" rx="2.300" ry="1.700" fill="#33221c" transform="rotate(-20 20.600 9.800)"/><path d="M14.200 8.300L15.800 7.600" stroke="#33221c" stroke-width="1.300"/><path d="M19.500 11.500Q18 15 14.500 17M21.500 14L21 19.500M23 13.500L22.200 18" fill="none" stroke="#33221c" stroke-width="0.900"/></svg>
<svg class="a" style="left:1069px;top:1040px;" width="30" height="30" viewBox="0 0 30 30"><circle cx="15" cy="15" r="14" fill="#fdfdfd" stroke="#3aa9b5" stroke-width="1.800"/><path d="M10 28.300L12.500 21.500Q14 18.800 16.500 20.500L18.500 22L20.500 19.500L22 24.500L19.500 28.800Q15 30 10 28.300Z" fill="#33221c"/><path d="M4.500 14Q5 8 11 5.500Q16 3.800 19.500 6" fill="none" stroke="#33221c" stroke-width="1"/><path d="M5 15.500Q3.800 12.500 6 11" fill="none" stroke="#33221c" stroke-width="1.100"/><ellipse cx="20.600" cy="9.800" rx="2.300" ry="1.700" fill="#33221c" transform="rotate(-20 20.600 9.800)"/><path d="M14.200 8.300L15.800 7.600" stroke="#33221c" stroke-width="1.300"/><path d="M19.500 11.500Q18 15 14.500 17M21.500 14L21 19.500M23 13.500L22.200 18" fill="none" stroke="#33221c" stroke-width="0.900"/></svg>
<svg class="a" style="left:1132.5px;top:1045px;" width="26" height="19" viewBox="0 0 26 19"><rect x="0.500" y="0.500" width="25" height="18" fill="#5a2ca0" stroke="#8d8d99" stroke-width="1"/><path d="M2.500 4.200Q2.500 3.500 3.500 3.500M3.500 7.500Q2.500 7.500 2.500 6.800V4.200M6 5V5.800M6 7V7.800M8 3.500L10.500 7.800M11.500 8.200H14.500" fill="none" stroke="#f1eaff" stroke-width="1"/><path d="M19.500 1.800H20.500M21.500 1.800H22.500M23.300 1.800H24.300" stroke="#c9bfe0" stroke-width="0.800"/></svg>
<svg width="0" height="0" style="position:absolute"><defs><linearGradient id="wg" x1="0" y1="0" x2="1" y2="1"><stop offset="0" stop-color="#3a7fc4"/><stop offset="0.450" stop-color="#3f9a8a"/><stop offset="1" stop-color="#63b35c"/></linearGradient></defs></svg>
<svg class="a" style="left:1194px;top:1044px;" width="28" height="22" viewBox="0 0 28 22"><rect x="0.500" y="0.500" width="27" height="21" fill="#f4f6f7" stroke="#c2c9cc" stroke-width="1"/><rect x="3" y="4.500" width="12.500" height="14.500" fill="url(#wg)"/><path d="M17.500 6H22.500M17.500 8.500H22.500M17.500 11H22.500M17.500 13.500H22.500M17.500 16H22.500" stroke="#c9cfd2" stroke-width="1"/><rect x="23.800" y="4.500" width="1.700" height="9" fill="#4a9a8a"/><path d="M20 2.200H25.500" stroke="#d5dadd" stroke-width="1"/></svg>
<svg class="a" style="left:1256px;top:1044px;" width="28" height="22" viewBox="0 0 28 22"><rect x="0.500" y="0.500" width="27" height="21" fill="#f4f6f7" stroke="#c2c9cc" stroke-width="1"/><rect x="3" y="4.500" width="12.500" height="14.500" fill="url(#wg)"/><path d="M17.500 6H22.500M17.500 8.500H22.500M17.500 11H22.500M17.500 13.500H22.500M17.500 16H22.500" stroke="#c9cfd2" stroke-width="1"/><rect x="23.800" y="4.500" width="1.700" height="9" fill="#4a9a8a"/><path d="M20 2.200H25.500" stroke="#d5dadd" stroke-width="1"/></svg>
<svg class="a" style="left:1317.5px;top:1044px;" width="28" height="22" viewBox="0 0 28 22"><rect x="0.500" y="0.500" width="27" height="21" fill="#f4f6f7" stroke="#c2c9cc" stroke-width="1"/><rect x="3" y="4.500" width="12.500" height="14.500" fill="url(#wg)"/><path d="M17.500 6H22.500M17.500 8.500H22.500M17.500 11H22.500M17.500 13.500H22.500M17.500 16H22.500" stroke="#c9cfd2" stroke-width="1"/><rect x="23.800" y="4.500" width="1.700" height="9" fill="#4a9a8a"/><path d="M20 2.200H25.500" stroke="#d5dadd" stroke-width="1"/></svg>
<svg class="a" style="left:1379.5px;top:1044px;" width="28" height="22" viewBox="0 0 28 22"><rect x="0.500" y="0.500" width="27" height="21" fill="#f4f6f7" stroke="#c2c9cc" stroke-width="1"/><rect x="3" y="4.500" width="12.500" height="14.500" fill="url(#wg)"/><path d="M17.500 6H22.500M17.500 8.500H22.500M17.500 11H22.500M17.500 13.500H22.500M17.500 16H22.500" stroke="#c9cfd2" stroke-width="1"/><rect x="23.800" y="4.500" width="1.700" height="9" fill="#4a9a8a"/><path d="M20 2.200H25.500" stroke="#d5dadd" stroke-width="1"/></svg>
<div class="a" style="left:625px;top:1077px;width:39.5px;height:3px;background:#76b9ed;"></div>
<div class="a" style="left:687px;top:1077px;width:50.5px;height:3px;background:#76b9ed;"></div>
<div class="a" style="left:749px;top:1077px;width:51px;height:3px;background:#76b9ed;"></div>
<div class="a" style="left:935px;top:1077px;width:50.5px;height:3px;background:#76b9ed;"></div>
<div class="a" style="left:1059px;top:1077px;width:51px;height:3px;background:#76b9ed;"></div>
<div class="a" style="left:1121px;top:1077px;width:40.5px;height:3px;background:#76b9ed;"></div>
<div class="a" style="left:1183px;top:1077px;width:51px;height:3px;background:#76b9ed;"></div>
<div class="a" style="left:1245px;top:1077px;width:51px;height:3px;background:#76b9ed;"></div>
<div class="a" style="left:1306.5px;top:1077px;width:52.0px;height:3px;background:#76b9ed;"></div>
<div class="a" style="left:1368.5px;top:1077px;width:51.5px;height:3px;background:#76b9ed;"></div>
<div class="a" style="left:665.5px;top:1077px;width:10.5px;height:3px;background:#5b8fbb;"></div>
<div class="a" style="left:1162.5px;top:1077px;width:9.5px;height:3px;background:#5b8fbb;"></div>
<div class="a" style="left:1499px;top:1043.5px;width:23.5px;height:23.5px;border-radius:50%;background:radial-gradient(circle at 40% 35%,#ffe066 0%,#ffc933 45%,#f59a0c 100%);"></div>
<div class="a t" id="t137" style="transform:scaleX(0.8833);left:1536px;top:1042.20px;height:26px;line-height:26px;font-size:19px;color:#fff;">30°C</div>
<svg class="a" style="left:1595px;top:1051px;" width="17" height="9.5" viewBox="0 0 17 9.5"><path d="M0.800 9L8.500 1.200L16.200 9" fill="none" stroke="#fff" stroke-width="1.500"/></svg>
<svg class="a" style="left:1626px;top:1044px;" width="14" height="21" viewBox="0 0 14 21"><rect x="3.500" y="0.500" width="7" height="13" rx="3.500" fill="#fff"/><path d="M0.800 9.500Q0.800 16 7 16Q13.200 16 13.200 9.500M7 16V20M3.500 20.300H10.500" fill="none" stroke="#fff" stroke-width="1.300"/></svg>
<svg class="a" style="left:1652.5px;top:1045px;" width="21" height="21" viewBox="0 0 21 21"><path d="M0.700 2.500L17.500 0.700V10M0.700 2.500V17L9 16" fill="none" stroke="#fff" stroke-width="1.300"/><path d="M5 8Q7 4.500 11 5.500M11 5.500L9.500 3.500M11 5.500L9 7M12.500 9.500Q10.500 13 6.500 12M6.500 12L8 14M6.500 12L8.500 10.500" fill="none" stroke="#fff" stroke-width="1.100"/><circle cx="15.500" cy="15.500" r="4.200" fill="#f7941d"/></svg>
<svg class="a" style="left:1684px;top:1050px;" width="20" height="11" viewBox="0 0 20 11"><rect x="0.600" y="0.600" width="16.800" height="9.800" fill="none" stroke="#fff" stroke-width="1.200"/><rect x="2.500" y="2.500" width="8" height="6" fill="#fff"/><rect x="18" y="3.500" width="1.800" height="4" fill="#fff"/></svg>
<svg class="a" style="left:1715px;top:1046px;" width="18" height="18" viewBox="0 0 18 18"><path d="M1 17A16 16 0 0 1 17 1" fill="none" stroke="#9aa" stroke-width="1.300"/><path d="M5.500 17A11.500 11.500 0 0 1 17 5.500" fill="none" stroke="#fff" stroke-width="1.300"/><path d="M10 17A7 7 0 0 1 17 10" fill="none" stroke="#fff" stroke-width="1.300"/><circle cx="15.500" cy="15.500" r="1.700" fill="#fff"/></svg>
<svg class="a" style="left:1743px;top:1046px;" width="20" height="18" viewBox="0 0 20 18"><path d="M0.700 6H4L9 1.500V16.500L4 12H0.700Z" fill="none" stroke="#fff" stroke-width="1.200"/><path d="M11.500 6Q13.500 9 11.500 12M14 3.500Q17.500 9 14 14.500" fill="none" stroke="#fff" stroke-width="1.100"/><path d="M16.500 1.500Q21 9 16.500 16.500" fill="none" stroke="#8a95a5" stroke-width="1.100"/></svg>
<div class="a t" id="t138" style="transform:scaleX(0.8629);left:1794.3px;top:1032.70px;height:21px;line-height:21px;font-size:15px;color:#fff;">15:01</div>
<div class="a t" id="t139" style="transform:scaleX(0.9141);left:1780px;top:1056.00px;height:21px;line-height:21px;font-size:15px;color:#fff;">9.07.2021</div>
<svg class="a" style="left:1868px;top:1045.5px;" width="22" height="19" viewBox="0 0 22 19"><path d="M0.700 0.700H21.300V14.300H13.500L11 17.500L8.500 14.300H0.700Z" fill="none" stroke="#fff" stroke-width="1.300"/></svg>
<div class="a" style="left:1914px;top:1030px;width:1px;height:50px;background:#5a6270;"></div>
</body></html>
